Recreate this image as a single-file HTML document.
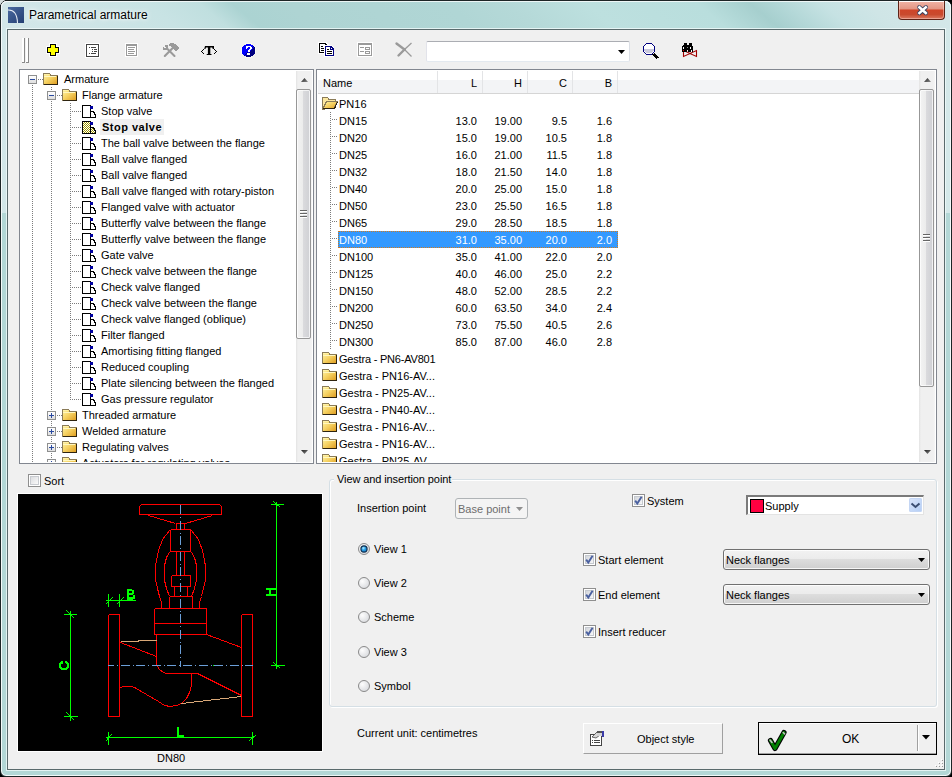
<!DOCTYPE html>
<html><head><meta charset="utf-8"><style>
*{margin:0;padding:0;box-sizing:border-box}
html,body{width:952px;height:777px;overflow:hidden;background:#000}
body{position:relative;font-family:"Liberation Sans",sans-serif;font-size:11px;line-height:13px;color:#000}
.a{position:absolute}
.t{position:absolute;white-space:nowrap;font-size:11px;line-height:13px}
svg{position:absolute;overflow:visible}
</style></head>
<body>
<div class="a tl-corner" style="left:0;top:0;width:5px;height:5px;background:#d6dede"></div>
<div class="a" style="left:0;top:0;width:952px;height:777px;border-radius:7px 7px 6px 6px;background:linear-gradient(100deg,#d3e7e9 0px,#cfe5e6 150px,#bfdfdf 215px,#a9d2d2 265px,#b2d7d6 330px,#b4d8d7 520px,#bfe0df 640px,#b0d6d5 720px,#a8d1d0 755px,#c3e1e2 820px,#d2e7e8 890px,#d4e8e9 952px);border:1px solid #1d2526;box-shadow:inset 0 0 0 1px rgba(255,255,255,.75)"></div>
<div class="a title-grad" style="left:1px;top:1px;width:950px;height:28px;border-radius:6px 6px 0 0;background:linear-gradient(40deg,#d3e7e9 11px,#c8e3e4 114px,#c0dfdf 147px,#abd3d2 168px,#aed4d3 204px,#b0d6d5 306px,#b5d9d8 345px,#bde0df 396px,#b9dedd 467px,#a6cfce 501px,#b4d8d8 522px,#c6e2e3 547px,#cfe5e6 576px,#d4e8e9 623px);box-shadow:inset 0 1px 0 rgba(255,255,255,.75),inset 1px 0 0 rgba(255,255,255,.75),inset -1px 0 0 rgba(255,255,255,.75)"></div>
<div class="a" style="left:2px;top:213px;width:948px;height:562px;border-radius:0 0 5px 5px;background:#b3d7d6"></div>
<div class="a" style="left:6px;top:28px;width:940px;height:743px;border:1px solid rgba(240,250,250,.8)"></div>
<div class="a" style="left:7px;top:29px;width:938px;height:741px;background:#f0f0f0;border:1px solid #5a6a6c"></div>
<svg style="left:8px;top:7px" width="16" height="16" viewBox="0 0 16 16"><defs><linearGradient id="ig" x1="0" y1="0" x2="1" y2="1"><stop offset="0" stop-color="#4a6aa0"/><stop offset="1" stop-color="#243f72"/></linearGradient></defs><rect width="16" height="16" fill="url(#ig)"/><path d="M0 3 Q9 2.5 9.5 16" fill="none" stroke="#e8eef6" stroke-width="1.1"/></svg>
<div class="t" style="left:29px;top:8px;font-size:12px;line-height:14px;color:#000;text-shadow:0 0 6px #fff,0 0 3px #fff">Parametrical armature</div>
<div class="a" style="left:898px;top:1px;width:47px;height:19px;border:1px solid #5d2216;border-top:none;border-radius:0 0 4px 4px;background:linear-gradient(#f0b4a6 0%,#e39684 44%,#cf4529 50%,#c94a2e 75%,#db7a62 100%);box-shadow:inset 0 1px 0 rgba(255,255,255,.95),inset 0 0 0 1px rgba(255,220,210,.45)"></div>
<svg style="left:915px;top:4px" width="15" height="12" viewBox="0 0 15 12"><path d="M4.4 3.3 L10.8 9 M10.8 3.3 L4.4 9" stroke="#3a4260" stroke-width="4.4" stroke-linecap="round"/><path d="M4.4 3.3 L10.8 9 M10.8 3.3 L4.4 9" stroke="#fff" stroke-width="2.5" stroke-linecap="square"/></svg>
<svg style="left:0;top:0" width="952" height="70" viewBox="0 0 952 70" shape-rendering="crispEdges">
<!-- gripper -->
<rect x="22" y="38" width="2" height="25" fill="#fff"/><rect x="24" y="38" width="1" height="25" fill="#8a8a8a"/><rect x="22" y="62" width="3" height="1" fill="#8a8a8a"/>
<rect x="26" y="38" width="2" height="25" fill="#fff"/><rect x="28" y="38" width="1" height="25" fill="#8a8a8a"/><rect x="26" y="62" width="3" height="1" fill="#8a8a8a"/>
<!-- plus -->
<path d="M49 43h8v3h3v8h-3v3h-8v-3h-3v-8h3z" fill="#fff"/>
<path d="M50 44h6v3h3v6h-3v3h-6v-3h-3v-6h3z" fill="#000"/>
<path d="M51 45h4v3h3v4h-3v3h-4v-3h-3v-4h3z" fill="#ffff00"/>
<!-- list icon -->
<rect x="85" y="43" width="15" height="15" fill="#fff"/>
<rect x="86" y="44" width="13" height="13" fill="#444"/><rect x="87" y="45" width="11" height="11" fill="#fff"/>
<rect x="89" y="47" width="1" height="1" fill="#444"/><rect x="91" y="47" width="5" height="1" fill="#444"/>
<rect x="92" y="49" width="1" height="1" fill="#444"/><rect x="94" y="49" width="3" height="1" fill="#444"/>
<rect x="92" y="51" width="1" height="1" fill="#444"/><rect x="94" y="51" width="3" height="1" fill="#444"/>
<rect x="89" y="53" width="1" height="1" fill="#444"/><rect x="91" y="53" width="5" height="1" fill="#444"/>
<!-- gray doc -->
<rect x="125" y="43" width="13" height="14" fill="#fff"/>
<rect x="126" y="44" width="11" height="12" fill="#9a9a9a"/><rect x="127" y="46" width="9" height="9" fill="#fff"/>
<rect x="128" y="47" width="7" height="1" fill="#9a9a9a"/><rect x="128" y="49" width="6" height="1" fill="#9a9a9a"/><rect x="128" y="51" width="7" height="1" fill="#9a9a9a"/><rect x="128" y="53" width="6" height="1" fill="#9a9a9a"/>
</svg>
<svg style="left:0;top:0" width="952" height="70" viewBox="0 0 952 70" shape-rendering="crispEdges"><rect x="170" y="43" width="4" height="1" fill="#9a9a9a"/><rect x="169" y="44" width="7" height="1" fill="#9a9a9a"/><rect x="165" y="45" width="3" height="1" fill="#9a9a9a"/><rect x="169" y="45" width="8" height="1" fill="#9a9a9a"/><rect x="165" y="46" width="3" height="1" fill="#9a9a9a"/><rect x="171" y="46" width="7" height="1" fill="#9a9a9a"/><rect x="163" y="47" width="1" height="1" fill="#9a9a9a"/><rect x="166" y="47" width="2" height="1" fill="#9a9a9a"/><rect x="172" y="47" width="7" height="1" fill="#9a9a9a"/><rect x="163" y="48" width="5" height="1" fill="#9a9a9a"/><rect x="173" y="48" width="6" height="1" fill="#9a9a9a"/><rect x="163" y="49" width="6" height="1" fill="#9a9a9a"/><rect x="174" y="49" width="4" height="1" fill="#9a9a9a"/><rect x="175" y="50" width="2" height="1" fill="#9a9a9a"/></svg>
<svg style="left:0;top:0" width="952" height="70" viewBox="0 0 952 70"><path d="M164.8 56 L172.5 48.3 M174.5 56 L167.5 49" stroke="#9a9a9a" stroke-width="2.1" stroke-linecap="round"/></svg>
<svg style="left:198px;top:40px" width="22" height="20" viewBox="0 0 22 20">
<path d="M6 9h1v1h-1v1h-1v1h-1v1h1v1h1v1h1v1h-1v-1h-1v-1h-1v-1h-1v-1h1v-1h1v-1h1z" fill="none"/><g shape-rendering="crispEdges" fill="#000"><rect x="5" y="9" width="1" height="1"/><rect x="4" y="10" width="1" height="1"/><rect x="3" y="11" width="1" height="1"/><rect x="4" y="12" width="1" height="1"/><rect x="5" y="13" width="1" height="1"/><rect x="16" y="9" width="1" height="1"/><rect x="17" y="10" width="1" height="1"/><rect x="18" y="11" width="1" height="1"/><rect x="17" y="12" width="1" height="1"/><rect x="16" y="13" width="1" height="1"/></g>
<path d="M7 6h9v3h-1.2l-.6-1.6h-1.9v6.6h1.2v1h-4.8v-1h1.2v-6.6h-1.9l-.6 1.6h-1.2z" fill="#000"/>
</svg>
<svg style="left:0;top:0" width="952" height="70" viewBox="0 0 952 70" shape-rendering="crispEdges"><rect x="245" y="43" width="7" height="1" fill="#fffff0" opacity=".8"/><rect x="245" y="57" width="7" height="1" fill="#fffff0" opacity=".8"/><rect x="241" y="47" width="1" height="7" fill="#fffff0" opacity=".8"/><rect x="255" y="47" width="1" height="7" fill="#fffff0" opacity=".8"/><rect x="246" y="44" width="1" height="1" fill="#0000ff"/><rect x="247" y="44" width="1" height="1" fill="#0000ff"/><rect x="248" y="44" width="1" height="1" fill="#0000ff"/><rect x="249" y="44" width="1" height="1" fill="#0000ff"/><rect x="250" y="44" width="1" height="1" fill="#0000ff"/><rect x="244" y="45" width="1" height="1" fill="#0000ff"/><rect x="245" y="45" width="1" height="1" fill="#0000ff"/><rect x="246" y="45" width="1" height="1" fill="#0000ff"/><rect x="247" y="45" width="1" height="1" fill="#0000ff"/><rect x="248" y="45" width="1" height="1" fill="#0000ff"/><rect x="249" y="45" width="1" height="1" fill="#0000ff"/><rect x="250" y="45" width="1" height="1" fill="#0000ff"/><rect x="251" y="45" width="1" height="1" fill="#0000ff"/><rect x="252" y="45" width="1" height="1" fill="#0000ff"/><rect x="243" y="46" width="1" height="1" fill="#0000ff"/><rect x="244" y="46" width="1" height="1" fill="#0000ff"/><rect x="245" y="46" width="1" height="1" fill="#0000ff"/><rect x="246" y="46" width="1" height="1" fill="#0000ff"/><rect x="247" y="46" width="1" height="1" fill="#0000ff"/><rect x="248" y="46" width="1" height="1" fill="#0000ff"/><rect x="249" y="46" width="1" height="1" fill="#0000ff"/><rect x="250" y="46" width="1" height="1" fill="#0000ff"/><rect x="251" y="46" width="1" height="1" fill="#0000ff"/><rect x="252" y="46" width="1" height="1" fill="#0000ff"/><rect x="253" y="46" width="1" height="1" fill="#000080"/><rect x="242" y="47" width="1" height="1" fill="#0000ff"/><rect x="243" y="47" width="1" height="1" fill="#0000ff"/><rect x="244" y="47" width="1" height="1" fill="#0000ff"/><rect x="245" y="47" width="1" height="1" fill="#0000ff"/><rect x="246" y="47" width="1" height="1" fill="#0000ff"/><rect x="247" y="47" width="1" height="1" fill="#0000ff"/><rect x="248" y="47" width="1" height="1" fill="#0000ff"/><rect x="249" y="47" width="1" height="1" fill="#0000ff"/><rect x="250" y="47" width="1" height="1" fill="#0000ff"/><rect x="251" y="47" width="1" height="1" fill="#0000ff"/><rect x="252" y="47" width="1" height="1" fill="#000080"/><rect x="253" y="47" width="1" height="1" fill="#0000ff"/><rect x="254" y="47" width="1" height="1" fill="#000080"/><rect x="242" y="48" width="1" height="1" fill="#0000ff"/><rect x="243" y="48" width="1" height="1" fill="#0000ff"/><rect x="244" y="48" width="1" height="1" fill="#0000ff"/><rect x="245" y="48" width="1" height="1" fill="#0000ff"/><rect x="246" y="48" width="1" height="1" fill="#0000ff"/><rect x="247" y="48" width="1" height="1" fill="#0000ff"/><rect x="248" y="48" width="1" height="1" fill="#0000ff"/><rect x="249" y="48" width="1" height="1" fill="#0000ff"/><rect x="250" y="48" width="1" height="1" fill="#0000ff"/><rect x="251" y="48" width="1" height="1" fill="#000080"/><rect x="252" y="48" width="1" height="1" fill="#0000ff"/><rect x="253" y="48" width="1" height="1" fill="#000080"/><rect x="254" y="48" width="1" height="1" fill="#000080"/><rect x="242" y="49" width="1" height="1" fill="#0000ff"/><rect x="243" y="49" width="1" height="1" fill="#0000ff"/><rect x="244" y="49" width="1" height="1" fill="#0000ff"/><rect x="245" y="49" width="1" height="1" fill="#0000ff"/><rect x="246" y="49" width="1" height="1" fill="#0000ff"/><rect x="247" y="49" width="1" height="1" fill="#0000ff"/><rect x="248" y="49" width="1" height="1" fill="#0000ff"/><rect x="249" y="49" width="1" height="1" fill="#0000ff"/><rect x="250" y="49" width="1" height="1" fill="#000080"/><rect x="251" y="49" width="1" height="1" fill="#0000ff"/><rect x="252" y="49" width="1" height="1" fill="#000080"/><rect x="253" y="49" width="1" height="1" fill="#000080"/><rect x="254" y="49" width="1" height="1" fill="#000080"/><rect x="242" y="50" width="1" height="1" fill="#0000ff"/><rect x="243" y="50" width="1" height="1" fill="#0000ff"/><rect x="244" y="50" width="1" height="1" fill="#0000ff"/><rect x="245" y="50" width="1" height="1" fill="#0000ff"/><rect x="246" y="50" width="1" height="1" fill="#0000ff"/><rect x="247" y="50" width="1" height="1" fill="#0000ff"/><rect x="248" y="50" width="1" height="1" fill="#0000ff"/><rect x="249" y="50" width="1" height="1" fill="#000080"/><rect x="250" y="50" width="1" height="1" fill="#0000ff"/><rect x="251" y="50" width="1" height="1" fill="#000080"/><rect x="252" y="50" width="1" height="1" fill="#000080"/><rect x="253" y="50" width="1" height="1" fill="#000080"/><rect x="254" y="50" width="1" height="1" fill="#000080"/><rect x="242" y="51" width="1" height="1" fill="#0000ff"/><rect x="243" y="51" width="1" height="1" fill="#0000ff"/><rect x="244" y="51" width="1" height="1" fill="#0000ff"/><rect x="245" y="51" width="1" height="1" fill="#0000ff"/><rect x="246" y="51" width="1" height="1" fill="#0000ff"/><rect x="247" y="51" width="1" height="1" fill="#0000ff"/><rect x="248" y="51" width="1" height="1" fill="#000080"/><rect x="249" y="51" width="1" height="1" fill="#0000ff"/><rect x="250" y="51" width="1" height="1" fill="#000080"/><rect x="251" y="51" width="1" height="1" fill="#000080"/><rect x="252" y="51" width="1" height="1" fill="#000080"/><rect x="253" y="51" width="1" height="1" fill="#000080"/><rect x="254" y="51" width="1" height="1" fill="#000080"/><rect x="242" y="52" width="1" height="1" fill="#0000ff"/><rect x="243" y="52" width="1" height="1" fill="#0000ff"/><rect x="244" y="52" width="1" height="1" fill="#0000ff"/><rect x="245" y="52" width="1" height="1" fill="#0000ff"/><rect x="246" y="52" width="1" height="1" fill="#0000ff"/><rect x="247" y="52" width="1" height="1" fill="#000080"/><rect x="248" y="52" width="1" height="1" fill="#0000ff"/><rect x="249" y="52" width="1" height="1" fill="#000080"/><rect x="250" y="52" width="1" height="1" fill="#000080"/><rect x="251" y="52" width="1" height="1" fill="#000080"/><rect x="252" y="52" width="1" height="1" fill="#000080"/><rect x="253" y="52" width="1" height="1" fill="#000080"/><rect x="254" y="52" width="1" height="1" fill="#000080"/><rect x="242" y="53" width="1" height="1" fill="#0000ff"/><rect x="243" y="53" width="1" height="1" fill="#0000ff"/><rect x="244" y="53" width="1" height="1" fill="#0000ff"/><rect x="245" y="53" width="1" height="1" fill="#0000ff"/><rect x="246" y="53" width="1" height="1" fill="#000080"/><rect x="247" y="53" width="1" height="1" fill="#0000ff"/><rect x="248" y="53" width="1" height="1" fill="#000080"/><rect x="249" y="53" width="1" height="1" fill="#000080"/><rect x="250" y="53" width="1" height="1" fill="#000080"/><rect x="251" y="53" width="1" height="1" fill="#000080"/><rect x="252" y="53" width="1" height="1" fill="#000080"/><rect x="253" y="53" width="1" height="1" fill="#000080"/><rect x="254" y="53" width="1" height="1" fill="#000080"/><rect x="243" y="54" width="1" height="1" fill="#0000ff"/><rect x="244" y="54" width="1" height="1" fill="#0000ff"/><rect x="245" y="54" width="1" height="1" fill="#000080"/><rect x="246" y="54" width="1" height="1" fill="#0000ff"/><rect x="247" y="54" width="1" height="1" fill="#000080"/><rect x="248" y="54" width="1" height="1" fill="#000080"/><rect x="249" y="54" width="1" height="1" fill="#000080"/><rect x="250" y="54" width="1" height="1" fill="#000080"/><rect x="251" y="54" width="1" height="1" fill="#000080"/><rect x="252" y="54" width="1" height="1" fill="#000080"/><rect x="253" y="54" width="1" height="1" fill="#000080"/><rect x="244" y="55" width="1" height="1" fill="#000080"/><rect x="245" y="55" width="1" height="1" fill="#0000ff"/><rect x="246" y="55" width="1" height="1" fill="#000080"/><rect x="247" y="55" width="1" height="1" fill="#000080"/><rect x="248" y="55" width="1" height="1" fill="#000080"/><rect x="249" y="55" width="1" height="1" fill="#000080"/><rect x="250" y="55" width="1" height="1" fill="#000080"/><rect x="251" y="55" width="1" height="1" fill="#000080"/><rect x="252" y="55" width="1" height="1" fill="#000080"/><rect x="246" y="56" width="1" height="1" fill="#000080"/><rect x="247" y="56" width="1" height="1" fill="#000080"/><rect x="248" y="56" width="1" height="1" fill="#000080"/><rect x="249" y="56" width="1" height="1" fill="#000080"/><rect x="250" y="56" width="1" height="1" fill="#000080"/><rect x="246" y="46" width="5" height="1" fill="#fff"/><rect x="246" y="47" width="2" height="1" fill="#fff"/><rect x="250" y="47" width="2" height="1" fill="#fff"/><rect x="246" y="48" width="1" height="1" fill="#fff"/><rect x="250" y="48" width="2" height="1" fill="#fff"/><rect x="249" y="49" width="2" height="1" fill="#fff"/><rect x="248" y="50" width="2" height="1" fill="#fff"/><rect x="248" y="51" width="2" height="1" fill="#fff"/><rect x="247" y="53" width="3" height="2" fill="#fff"/></svg>
<svg style="left:0;top:0" width="952" height="70" viewBox="0 0 952 70" shape-rendering="crispEdges">
<!-- copy -->
<path d="M318 42h8l3 3v9h-11z" fill="#fff"/>
<path d="M319 43h6l2 2v8h-8z" fill="#000"/><path d="M320 44h5v2h1v6h-6z" fill="#fff"/>
<rect x="321" y="46" width="2" height="1" fill="#000"/><rect x="321" y="48" width="3" height="1" fill="#000"/><rect x="321" y="50" width="3" height="1" fill="#000"/>
<path d="M324 45h7l3 3v9h-10z" fill="#fff"/>
<path d="M325 46h6l3 3v7h-9z" fill="#000080"/><path d="M326 47h4v3h3v5h-7z" fill="#fff"/><rect x="331" y="48" width="1" height="1" fill="#fff"/>
<rect x="327" y="49" width="2" height="1" fill="#000"/><rect x="327" y="51" width="5" height="1" fill="#000"/><rect x="327" y="53" width="5" height="1" fill="#000"/>
<!-- form gray -->
<rect x="357" y="42" width="16" height="15" fill="#fff"/>
<rect x="358" y="43" width="14" height="13" fill="#9a9a9a"/><rect x="359" y="45" width="12" height="10" fill="#fff"/>
<rect x="360" y="47" width="4" height="1" fill="#9a9a9a"/><rect x="360" y="51" width="4" height="1" fill="#9a9a9a"/>
<rect x="365" y="47" width="5" height="3" fill="#9a9a9a"/><rect x="366" y="48" width="3" height="1" fill="#fff"/>
<rect x="365" y="51" width="5" height="3" fill="#9a9a9a"/><rect x="366" y="52" width="3" height="1" fill="#fff"/>
</svg>
<svg style="left:392px;top:40px" width="24" height="20" viewBox="0 0 24 20">
<path d="M4.5 3.5 L12.5 9.5" stroke="#9a9a9a" stroke-width="2.4" stroke-linecap="round"/>
<path d="M12.5 9.5 L19.5 16.5" stroke="#9a9a9a" stroke-width="1.2"/>
<path d="M19.5 3 L12.5 9.5" stroke="#9a9a9a" stroke-width="1.3"/>
<path d="M12.5 9.5 L6.5 15.5" stroke="#9a9a9a" stroke-width="2.4" stroke-linecap="round"/>
</svg>
<div class="a" style="left:426px;top:41px;width:204px;height:21px;border:1px solid #abadb3;border-top-color:#abadb3;border-left-color:#e2e3ea;border-bottom-color:#e3e9ef;border-right-color:#dbdfe6;border-radius:2px;background:#fff"></div>
<svg style="left:0;top:0" width="952" height="70" viewBox="0 0 952 70" shape-rendering="crispEdges">
<path d="M618 50h7l-3.5 4z" fill="#000" shape-rendering="auto"/>
</svg>
<svg style="left:0;top:0" width="952" height="70" viewBox="0 0 952 70" shape-rendering="crispEdges">
<path d="M646 43h6v1h1v1h1v1h1v6h-1v1h-1v1h-1v1h-6v-1h-1v-1h-1v-1h-1v-6h1v-1h1v-1h1z" fill="#000080"/>
<path d="M646 44h6v1h1v1h1v6h-1v1h-1v1h-6v-1h-1v-1h-1v-6h1v-1h1z" fill="#fff"/>
<path d="M644 49h10v2h-1v1h-1v1h-6v-1h-1v-1h-1z" fill="#c9c9dd"/>
<path d="M653 54h2v1h1v1h1v1h1v1h-1v1h-1v-1h-1v-1h-1v-1h-1v-1h-1v-1z" fill="#000"/>
<path d="M654 53h1v1h1v1h1v1h1v1h1v1h-1v-1h-1v-1h-1v-1h-1v-1h-1z" fill="#000"/>
</svg>
<svg style="left:0;top:0" width="952" height="70" viewBox="0 0 952 70">
<path d="M683.5 50.5 L690 53.5 L696.5 50.5 V56.5 L690 53.5 L683.5 56.5 Z" fill="none" stroke="#a00000" stroke-width="1.1"/>
</svg>
<svg style="left:0;top:0" width="952" height="70" viewBox="0 0 952 70" shape-rendering="crispEdges">
<path d="M684 43h3v2h2v-2h3v3h1v6h-5v-2h-1v2h-5v-6h1v-1h1z" fill="#000"/>
<rect x="683" y="47" width="1" height="2" fill="#fff"/><rect x="690" y="47" width="1" height="2" fill="#fff"/><rect x="687" y="47" width="1" height="1" fill="#888"/><rect x="691" y="50" width="1" height="2" fill="#fff"/><rect x="683" y="50" width="1" height="1" fill="#d00"/>
</svg>
<div class="a" style="left:19px;top:69px;width:295px;height:395px;border:1px solid #828790;background:#fff;overflow:hidden">
<div class="t" style="left:44px;top:3px">Armature</div><div class="t" style="left:62px;top:19px">Flange armature</div><div class="t" style="left:81px;top:35px">Stop valve</div><div class="a" style="left:80px;top:49px;width:64px;height:16px;background:#f0f0f0"></div><div class="t" style="left:82px;top:51px;font-weight:bold;letter-spacing:0.5px">Stop valve</div><div class="t" style="left:81px;top:67px">The ball valve between the flange</div><div class="t" style="left:81px;top:83px">Ball valve flanged</div><div class="t" style="left:81px;top:99px">Ball valve flanged</div><div class="t" style="left:81px;top:115px">Ball valve flanged with rotary-piston</div><div class="t" style="left:81px;top:131px">Flanged valve with actuator</div><div class="t" style="left:81px;top:147px">Butterfly valve between the flange</div><div class="t" style="left:81px;top:163px">Butterfly valve between the flange</div><div class="t" style="left:81px;top:179px">Gate valve</div><div class="t" style="left:81px;top:195px">Check valve between the flange</div><div class="t" style="left:81px;top:211px">Check valve flanged</div><div class="t" style="left:81px;top:227px">Check valve between the flange</div><div class="t" style="left:81px;top:243px">Check valve flanged (oblique)</div><div class="t" style="left:81px;top:259px">Filter flanged</div><div class="t" style="left:81px;top:275px">Amortising fitting flanged</div><div class="t" style="left:81px;top:291px">Reduced coupling</div><div class="t" style="left:81px;top:307px">Plate silencing between the flanged</div><div class="t" style="left:81px;top:323px">Gas pressure regulator</div><div class="t" style="left:62px;top:339px">Threaded armature</div><div class="t" style="left:62px;top:355px">Welded armature</div><div class="t" style="left:62px;top:371px">Regulating valves</div><div class="t" style="left:62px;top:387px">Actuators for regulating valves</div>
<svg style="left:-20px;top:-70px" width="952" height="777" viewBox="0 0 952 777" shape-rendering="crispEdges"><defs><linearGradient id="fd" x1="0" y1="0" x2="1" y2="1"><stop offset="0" stop-color="#fff6a8"/><stop offset=".5" stop-color="#f5d060"/><stop offset="1" stop-color="#de9c20"/></linearGradient><linearGradient id="bx" x1="0" y1="0" x2="0" y2="1"><stop offset="0" stop-color="#fff"/><stop offset=".5" stop-color="#f4f4f4"/><stop offset=".6" stop-color="#e6e6e6"/><stop offset="1" stop-color="#e0e0e0"/></linearGradient>

<pattern id="dith" width="2" height="2" patternUnits="userSpaceOnUse"><rect width="2" height="2" fill="#fff"/><rect width="1" height="1" fill="#a09800"/><rect x="1" y="1" width="1" height="1" fill="#a09800"/></pattern></defs><rect x="32" y="85" width="1" height="1" fill="#7c7c7c"/><rect x="32" y="87" width="1" height="1" fill="#7c7c7c"/><rect x="32" y="89" width="1" height="1" fill="#7c7c7c"/><rect x="32" y="91" width="1" height="1" fill="#7c7c7c"/><rect x="32" y="93" width="1" height="1" fill="#7c7c7c"/><rect x="32" y="95" width="1" height="1" fill="#7c7c7c"/><rect x="32" y="97" width="1" height="1" fill="#7c7c7c"/><rect x="32" y="99" width="1" height="1" fill="#7c7c7c"/><rect x="32" y="101" width="1" height="1" fill="#7c7c7c"/><rect x="32" y="103" width="1" height="1" fill="#7c7c7c"/><rect x="32" y="105" width="1" height="1" fill="#7c7c7c"/><rect x="32" y="107" width="1" height="1" fill="#7c7c7c"/><rect x="32" y="109" width="1" height="1" fill="#7c7c7c"/><rect x="32" y="111" width="1" height="1" fill="#7c7c7c"/><rect x="32" y="113" width="1" height="1" fill="#7c7c7c"/><rect x="32" y="115" width="1" height="1" fill="#7c7c7c"/><rect x="32" y="117" width="1" height="1" fill="#7c7c7c"/><rect x="32" y="119" width="1" height="1" fill="#7c7c7c"/><rect x="32" y="121" width="1" height="1" fill="#7c7c7c"/><rect x="32" y="123" width="1" height="1" fill="#7c7c7c"/><rect x="32" y="125" width="1" height="1" fill="#7c7c7c"/><rect x="32" y="127" width="1" height="1" fill="#7c7c7c"/><rect x="32" y="129" width="1" height="1" fill="#7c7c7c"/><rect x="32" y="131" width="1" height="1" fill="#7c7c7c"/><rect x="32" y="133" width="1" height="1" fill="#7c7c7c"/><rect x="32" y="135" width="1" height="1" fill="#7c7c7c"/><rect x="32" y="137" width="1" height="1" fill="#7c7c7c"/><rect x="32" y="139" width="1" height="1" fill="#7c7c7c"/><rect x="32" y="141" width="1" height="1" fill="#7c7c7c"/><rect x="32" y="143" width="1" height="1" fill="#7c7c7c"/><rect x="32" y="145" width="1" height="1" fill="#7c7c7c"/><rect x="32" y="147" width="1" height="1" fill="#7c7c7c"/><rect x="32" y="149" width="1" height="1" fill="#7c7c7c"/><rect x="32" y="151" width="1" height="1" fill="#7c7c7c"/><rect x="32" y="153" width="1" height="1" fill="#7c7c7c"/><rect x="32" y="155" width="1" height="1" fill="#7c7c7c"/><rect x="32" y="157" width="1" height="1" fill="#7c7c7c"/><rect x="32" y="159" width="1" height="1" fill="#7c7c7c"/><rect x="32" y="161" width="1" height="1" fill="#7c7c7c"/><rect x="32" y="163" width="1" height="1" fill="#7c7c7c"/><rect x="32" y="165" width="1" height="1" fill="#7c7c7c"/><rect x="32" y="167" width="1" height="1" fill="#7c7c7c"/><rect x="32" y="169" width="1" height="1" fill="#7c7c7c"/><rect x="32" y="171" width="1" height="1" fill="#7c7c7c"/><rect x="32" y="173" width="1" height="1" fill="#7c7c7c"/><rect x="32" y="175" width="1" height="1" fill="#7c7c7c"/><rect x="32" y="177" width="1" height="1" fill="#7c7c7c"/><rect x="32" y="179" width="1" height="1" fill="#7c7c7c"/><rect x="32" y="181" width="1" height="1" fill="#7c7c7c"/><rect x="32" y="183" width="1" height="1" fill="#7c7c7c"/><rect x="32" y="185" width="1" height="1" fill="#7c7c7c"/><rect x="32" y="187" width="1" height="1" fill="#7c7c7c"/><rect x="32" y="189" width="1" height="1" fill="#7c7c7c"/><rect x="32" y="191" width="1" height="1" fill="#7c7c7c"/><rect x="32" y="193" width="1" height="1" fill="#7c7c7c"/><rect x="32" y="195" width="1" height="1" fill="#7c7c7c"/><rect x="32" y="197" width="1" height="1" fill="#7c7c7c"/><rect x="32" y="199" width="1" height="1" fill="#7c7c7c"/><rect x="32" y="201" width="1" height="1" fill="#7c7c7c"/><rect x="32" y="203" width="1" height="1" fill="#7c7c7c"/><rect x="32" y="205" width="1" height="1" fill="#7c7c7c"/><rect x="32" y="207" width="1" height="1" fill="#7c7c7c"/><rect x="32" y="209" width="1" height="1" fill="#7c7c7c"/><rect x="32" y="211" width="1" height="1" fill="#7c7c7c"/><rect x="32" y="213" width="1" height="1" fill="#7c7c7c"/><rect x="32" y="215" width="1" height="1" fill="#7c7c7c"/><rect x="32" y="217" width="1" height="1" fill="#7c7c7c"/><rect x="32" y="219" width="1" height="1" fill="#7c7c7c"/><rect x="32" y="221" width="1" height="1" fill="#7c7c7c"/><rect x="32" y="223" width="1" height="1" fill="#7c7c7c"/><rect x="32" y="225" width="1" height="1" fill="#7c7c7c"/><rect x="32" y="227" width="1" height="1" fill="#7c7c7c"/><rect x="32" y="229" width="1" height="1" fill="#7c7c7c"/><rect x="32" y="231" width="1" height="1" fill="#7c7c7c"/><rect x="32" y="233" width="1" height="1" fill="#7c7c7c"/><rect x="32" y="235" width="1" height="1" fill="#7c7c7c"/><rect x="32" y="237" width="1" height="1" fill="#7c7c7c"/><rect x="32" y="239" width="1" height="1" fill="#7c7c7c"/><rect x="32" y="241" width="1" height="1" fill="#7c7c7c"/><rect x="32" y="243" width="1" height="1" fill="#7c7c7c"/><rect x="32" y="245" width="1" height="1" fill="#7c7c7c"/><rect x="32" y="247" width="1" height="1" fill="#7c7c7c"/><rect x="32" y="249" width="1" height="1" fill="#7c7c7c"/><rect x="32" y="251" width="1" height="1" fill="#7c7c7c"/><rect x="32" y="253" width="1" height="1" fill="#7c7c7c"/><rect x="32" y="255" width="1" height="1" fill="#7c7c7c"/><rect x="32" y="257" width="1" height="1" fill="#7c7c7c"/><rect x="32" y="259" width="1" height="1" fill="#7c7c7c"/><rect x="32" y="261" width="1" height="1" fill="#7c7c7c"/><rect x="32" y="263" width="1" height="1" fill="#7c7c7c"/><rect x="32" y="265" width="1" height="1" fill="#7c7c7c"/><rect x="32" y="267" width="1" height="1" fill="#7c7c7c"/><rect x="32" y="269" width="1" height="1" fill="#7c7c7c"/><rect x="32" y="271" width="1" height="1" fill="#7c7c7c"/><rect x="32" y="273" width="1" height="1" fill="#7c7c7c"/><rect x="32" y="275" width="1" height="1" fill="#7c7c7c"/><rect x="32" y="277" width="1" height="1" fill="#7c7c7c"/><rect x="32" y="279" width="1" height="1" fill="#7c7c7c"/><rect x="32" y="281" width="1" height="1" fill="#7c7c7c"/><rect x="32" y="283" width="1" height="1" fill="#7c7c7c"/><rect x="32" y="285" width="1" height="1" fill="#7c7c7c"/><rect x="32" y="287" width="1" height="1" fill="#7c7c7c"/><rect x="32" y="289" width="1" height="1" fill="#7c7c7c"/><rect x="32" y="291" width="1" height="1" fill="#7c7c7c"/><rect x="32" y="293" width="1" height="1" fill="#7c7c7c"/><rect x="32" y="295" width="1" height="1" fill="#7c7c7c"/><rect x="32" y="297" width="1" height="1" fill="#7c7c7c"/><rect x="32" y="299" width="1" height="1" fill="#7c7c7c"/><rect x="32" y="301" width="1" height="1" fill="#7c7c7c"/><rect x="32" y="303" width="1" height="1" fill="#7c7c7c"/><rect x="32" y="305" width="1" height="1" fill="#7c7c7c"/><rect x="32" y="307" width="1" height="1" fill="#7c7c7c"/><rect x="32" y="309" width="1" height="1" fill="#7c7c7c"/><rect x="32" y="311" width="1" height="1" fill="#7c7c7c"/><rect x="32" y="313" width="1" height="1" fill="#7c7c7c"/><rect x="32" y="315" width="1" height="1" fill="#7c7c7c"/><rect x="32" y="317" width="1" height="1" fill="#7c7c7c"/><rect x="32" y="319" width="1" height="1" fill="#7c7c7c"/><rect x="32" y="321" width="1" height="1" fill="#7c7c7c"/><rect x="32" y="323" width="1" height="1" fill="#7c7c7c"/><rect x="32" y="325" width="1" height="1" fill="#7c7c7c"/><rect x="32" y="327" width="1" height="1" fill="#7c7c7c"/><rect x="32" y="329" width="1" height="1" fill="#7c7c7c"/><rect x="32" y="331" width="1" height="1" fill="#7c7c7c"/><rect x="32" y="333" width="1" height="1" fill="#7c7c7c"/><rect x="32" y="335" width="1" height="1" fill="#7c7c7c"/><rect x="32" y="337" width="1" height="1" fill="#7c7c7c"/><rect x="32" y="339" width="1" height="1" fill="#7c7c7c"/><rect x="32" y="341" width="1" height="1" fill="#7c7c7c"/><rect x="32" y="343" width="1" height="1" fill="#7c7c7c"/><rect x="32" y="345" width="1" height="1" fill="#7c7c7c"/><rect x="32" y="347" width="1" height="1" fill="#7c7c7c"/><rect x="32" y="349" width="1" height="1" fill="#7c7c7c"/><rect x="32" y="351" width="1" height="1" fill="#7c7c7c"/><rect x="32" y="353" width="1" height="1" fill="#7c7c7c"/><rect x="32" y="355" width="1" height="1" fill="#7c7c7c"/><rect x="32" y="357" width="1" height="1" fill="#7c7c7c"/><rect x="32" y="359" width="1" height="1" fill="#7c7c7c"/><rect x="32" y="361" width="1" height="1" fill="#7c7c7c"/><rect x="32" y="363" width="1" height="1" fill="#7c7c7c"/><rect x="32" y="365" width="1" height="1" fill="#7c7c7c"/><rect x="32" y="367" width="1" height="1" fill="#7c7c7c"/><rect x="32" y="369" width="1" height="1" fill="#7c7c7c"/><rect x="32" y="371" width="1" height="1" fill="#7c7c7c"/><rect x="32" y="373" width="1" height="1" fill="#7c7c7c"/><rect x="32" y="375" width="1" height="1" fill="#7c7c7c"/><rect x="32" y="377" width="1" height="1" fill="#7c7c7c"/><rect x="32" y="379" width="1" height="1" fill="#7c7c7c"/><rect x="32" y="381" width="1" height="1" fill="#7c7c7c"/><rect x="32" y="383" width="1" height="1" fill="#7c7c7c"/><rect x="32" y="385" width="1" height="1" fill="#7c7c7c"/><rect x="32" y="387" width="1" height="1" fill="#7c7c7c"/><rect x="32" y="389" width="1" height="1" fill="#7c7c7c"/><rect x="32" y="391" width="1" height="1" fill="#7c7c7c"/><rect x="32" y="393" width="1" height="1" fill="#7c7c7c"/><rect x="32" y="395" width="1" height="1" fill="#7c7c7c"/><rect x="32" y="397" width="1" height="1" fill="#7c7c7c"/><rect x="32" y="399" width="1" height="1" fill="#7c7c7c"/><rect x="32" y="401" width="1" height="1" fill="#7c7c7c"/><rect x="32" y="403" width="1" height="1" fill="#7c7c7c"/><rect x="32" y="405" width="1" height="1" fill="#7c7c7c"/><rect x="32" y="407" width="1" height="1" fill="#7c7c7c"/><rect x="32" y="409" width="1" height="1" fill="#7c7c7c"/><rect x="32" y="411" width="1" height="1" fill="#7c7c7c"/><rect x="32" y="413" width="1" height="1" fill="#7c7c7c"/><rect x="32" y="415" width="1" height="1" fill="#7c7c7c"/><rect x="32" y="417" width="1" height="1" fill="#7c7c7c"/><rect x="32" y="419" width="1" height="1" fill="#7c7c7c"/><rect x="32" y="421" width="1" height="1" fill="#7c7c7c"/><rect x="32" y="423" width="1" height="1" fill="#7c7c7c"/><rect x="32" y="425" width="1" height="1" fill="#7c7c7c"/><rect x="32" y="427" width="1" height="1" fill="#7c7c7c"/><rect x="32" y="429" width="1" height="1" fill="#7c7c7c"/><rect x="32" y="431" width="1" height="1" fill="#7c7c7c"/><rect x="32" y="433" width="1" height="1" fill="#7c7c7c"/><rect x="32" y="435" width="1" height="1" fill="#7c7c7c"/><rect x="32" y="437" width="1" height="1" fill="#7c7c7c"/><rect x="32" y="439" width="1" height="1" fill="#7c7c7c"/><rect x="32" y="441" width="1" height="1" fill="#7c7c7c"/><rect x="32" y="443" width="1" height="1" fill="#7c7c7c"/><rect x="32" y="445" width="1" height="1" fill="#7c7c7c"/><rect x="32" y="447" width="1" height="1" fill="#7c7c7c"/><rect x="32" y="449" width="1" height="1" fill="#7c7c7c"/><rect x="32" y="451" width="1" height="1" fill="#7c7c7c"/><rect x="32" y="453" width="1" height="1" fill="#7c7c7c"/><rect x="32" y="455" width="1" height="1" fill="#7c7c7c"/><rect x="32" y="457" width="1" height="1" fill="#7c7c7c"/><rect x="32" y="459" width="1" height="1" fill="#7c7c7c"/><rect x="32" y="461" width="1" height="1" fill="#7c7c7c"/><rect x="32" y="463" width="1" height="1" fill="#7c7c7c"/><rect x="32" y="465" width="1" height="1" fill="#7c7c7c"/><rect x="32" y="467" width="1" height="1" fill="#7c7c7c"/><rect x="32" y="469" width="1" height="1" fill="#7c7c7c"/><rect x="51" y="87" width="1" height="1" fill="#7c7c7c"/><rect x="51" y="89" width="1" height="1" fill="#7c7c7c"/><rect x="51" y="91" width="1" height="1" fill="#7c7c7c"/><rect x="51" y="93" width="1" height="1" fill="#7c7c7c"/><rect x="51" y="95" width="1" height="1" fill="#7c7c7c"/><rect x="51" y="97" width="1" height="1" fill="#7c7c7c"/><rect x="51" y="99" width="1" height="1" fill="#7c7c7c"/><rect x="51" y="101" width="1" height="1" fill="#7c7c7c"/><rect x="51" y="103" width="1" height="1" fill="#7c7c7c"/><rect x="51" y="105" width="1" height="1" fill="#7c7c7c"/><rect x="51" y="107" width="1" height="1" fill="#7c7c7c"/><rect x="51" y="109" width="1" height="1" fill="#7c7c7c"/><rect x="51" y="111" width="1" height="1" fill="#7c7c7c"/><rect x="51" y="113" width="1" height="1" fill="#7c7c7c"/><rect x="51" y="115" width="1" height="1" fill="#7c7c7c"/><rect x="51" y="117" width="1" height="1" fill="#7c7c7c"/><rect x="51" y="119" width="1" height="1" fill="#7c7c7c"/><rect x="51" y="121" width="1" height="1" fill="#7c7c7c"/><rect x="51" y="123" width="1" height="1" fill="#7c7c7c"/><rect x="51" y="125" width="1" height="1" fill="#7c7c7c"/><rect x="51" y="127" width="1" height="1" fill="#7c7c7c"/><rect x="51" y="129" width="1" height="1" fill="#7c7c7c"/><rect x="51" y="131" width="1" height="1" fill="#7c7c7c"/><rect x="51" y="133" width="1" height="1" fill="#7c7c7c"/><rect x="51" y="135" width="1" height="1" fill="#7c7c7c"/><rect x="51" y="137" width="1" height="1" fill="#7c7c7c"/><rect x="51" y="139" width="1" height="1" fill="#7c7c7c"/><rect x="51" y="141" width="1" height="1" fill="#7c7c7c"/><rect x="51" y="143" width="1" height="1" fill="#7c7c7c"/><rect x="51" y="145" width="1" height="1" fill="#7c7c7c"/><rect x="51" y="147" width="1" height="1" fill="#7c7c7c"/><rect x="51" y="149" width="1" height="1" fill="#7c7c7c"/><rect x="51" y="151" width="1" height="1" fill="#7c7c7c"/><rect x="51" y="153" width="1" height="1" fill="#7c7c7c"/><rect x="51" y="155" width="1" height="1" fill="#7c7c7c"/><rect x="51" y="157" width="1" height="1" fill="#7c7c7c"/><rect x="51" y="159" width="1" height="1" fill="#7c7c7c"/><rect x="51" y="161" width="1" height="1" fill="#7c7c7c"/><rect x="51" y="163" width="1" height="1" fill="#7c7c7c"/><rect x="51" y="165" width="1" height="1" fill="#7c7c7c"/><rect x="51" y="167" width="1" height="1" fill="#7c7c7c"/><rect x="51" y="169" width="1" height="1" fill="#7c7c7c"/><rect x="51" y="171" width="1" height="1" fill="#7c7c7c"/><rect x="51" y="173" width="1" height="1" fill="#7c7c7c"/><rect x="51" y="175" width="1" height="1" fill="#7c7c7c"/><rect x="51" y="177" width="1" height="1" fill="#7c7c7c"/><rect x="51" y="179" width="1" height="1" fill="#7c7c7c"/><rect x="51" y="181" width="1" height="1" fill="#7c7c7c"/><rect x="51" y="183" width="1" height="1" fill="#7c7c7c"/><rect x="51" y="185" width="1" height="1" fill="#7c7c7c"/><rect x="51" y="187" width="1" height="1" fill="#7c7c7c"/><rect x="51" y="189" width="1" height="1" fill="#7c7c7c"/><rect x="51" y="191" width="1" height="1" fill="#7c7c7c"/><rect x="51" y="193" width="1" height="1" fill="#7c7c7c"/><rect x="51" y="195" width="1" height="1" fill="#7c7c7c"/><rect x="51" y="197" width="1" height="1" fill="#7c7c7c"/><rect x="51" y="199" width="1" height="1" fill="#7c7c7c"/><rect x="51" y="201" width="1" height="1" fill="#7c7c7c"/><rect x="51" y="203" width="1" height="1" fill="#7c7c7c"/><rect x="51" y="205" width="1" height="1" fill="#7c7c7c"/><rect x="51" y="207" width="1" height="1" fill="#7c7c7c"/><rect x="51" y="209" width="1" height="1" fill="#7c7c7c"/><rect x="51" y="211" width="1" height="1" fill="#7c7c7c"/><rect x="51" y="213" width="1" height="1" fill="#7c7c7c"/><rect x="51" y="215" width="1" height="1" fill="#7c7c7c"/><rect x="51" y="217" width="1" height="1" fill="#7c7c7c"/><rect x="51" y="219" width="1" height="1" fill="#7c7c7c"/><rect x="51" y="221" width="1" height="1" fill="#7c7c7c"/><rect x="51" y="223" width="1" height="1" fill="#7c7c7c"/><rect x="51" y="225" width="1" height="1" fill="#7c7c7c"/><rect x="51" y="227" width="1" height="1" fill="#7c7c7c"/><rect x="51" y="229" width="1" height="1" fill="#7c7c7c"/><rect x="51" y="231" width="1" height="1" fill="#7c7c7c"/><rect x="51" y="233" width="1" height="1" fill="#7c7c7c"/><rect x="51" y="235" width="1" height="1" fill="#7c7c7c"/><rect x="51" y="237" width="1" height="1" fill="#7c7c7c"/><rect x="51" y="239" width="1" height="1" fill="#7c7c7c"/><rect x="51" y="241" width="1" height="1" fill="#7c7c7c"/><rect x="51" y="243" width="1" height="1" fill="#7c7c7c"/><rect x="51" y="245" width="1" height="1" fill="#7c7c7c"/><rect x="51" y="247" width="1" height="1" fill="#7c7c7c"/><rect x="51" y="249" width="1" height="1" fill="#7c7c7c"/><rect x="51" y="251" width="1" height="1" fill="#7c7c7c"/><rect x="51" y="253" width="1" height="1" fill="#7c7c7c"/><rect x="51" y="255" width="1" height="1" fill="#7c7c7c"/><rect x="51" y="257" width="1" height="1" fill="#7c7c7c"/><rect x="51" y="259" width="1" height="1" fill="#7c7c7c"/><rect x="51" y="261" width="1" height="1" fill="#7c7c7c"/><rect x="51" y="263" width="1" height="1" fill="#7c7c7c"/><rect x="51" y="265" width="1" height="1" fill="#7c7c7c"/><rect x="51" y="267" width="1" height="1" fill="#7c7c7c"/><rect x="51" y="269" width="1" height="1" fill="#7c7c7c"/><rect x="51" y="271" width="1" height="1" fill="#7c7c7c"/><rect x="51" y="273" width="1" height="1" fill="#7c7c7c"/><rect x="51" y="275" width="1" height="1" fill="#7c7c7c"/><rect x="51" y="277" width="1" height="1" fill="#7c7c7c"/><rect x="51" y="279" width="1" height="1" fill="#7c7c7c"/><rect x="51" y="281" width="1" height="1" fill="#7c7c7c"/><rect x="51" y="283" width="1" height="1" fill="#7c7c7c"/><rect x="51" y="285" width="1" height="1" fill="#7c7c7c"/><rect x="51" y="287" width="1" height="1" fill="#7c7c7c"/><rect x="51" y="289" width="1" height="1" fill="#7c7c7c"/><rect x="51" y="291" width="1" height="1" fill="#7c7c7c"/><rect x="51" y="293" width="1" height="1" fill="#7c7c7c"/><rect x="51" y="295" width="1" height="1" fill="#7c7c7c"/><rect x="51" y="297" width="1" height="1" fill="#7c7c7c"/><rect x="51" y="299" width="1" height="1" fill="#7c7c7c"/><rect x="51" y="301" width="1" height="1" fill="#7c7c7c"/><rect x="51" y="303" width="1" height="1" fill="#7c7c7c"/><rect x="51" y="305" width="1" height="1" fill="#7c7c7c"/><rect x="51" y="307" width="1" height="1" fill="#7c7c7c"/><rect x="51" y="309" width="1" height="1" fill="#7c7c7c"/><rect x="51" y="311" width="1" height="1" fill="#7c7c7c"/><rect x="51" y="313" width="1" height="1" fill="#7c7c7c"/><rect x="51" y="315" width="1" height="1" fill="#7c7c7c"/><rect x="51" y="317" width="1" height="1" fill="#7c7c7c"/><rect x="51" y="319" width="1" height="1" fill="#7c7c7c"/><rect x="51" y="321" width="1" height="1" fill="#7c7c7c"/><rect x="51" y="323" width="1" height="1" fill="#7c7c7c"/><rect x="51" y="325" width="1" height="1" fill="#7c7c7c"/><rect x="51" y="327" width="1" height="1" fill="#7c7c7c"/><rect x="51" y="329" width="1" height="1" fill="#7c7c7c"/><rect x="51" y="331" width="1" height="1" fill="#7c7c7c"/><rect x="51" y="333" width="1" height="1" fill="#7c7c7c"/><rect x="51" y="335" width="1" height="1" fill="#7c7c7c"/><rect x="51" y="337" width="1" height="1" fill="#7c7c7c"/><rect x="51" y="339" width="1" height="1" fill="#7c7c7c"/><rect x="51" y="341" width="1" height="1" fill="#7c7c7c"/><rect x="51" y="343" width="1" height="1" fill="#7c7c7c"/><rect x="51" y="345" width="1" height="1" fill="#7c7c7c"/><rect x="51" y="347" width="1" height="1" fill="#7c7c7c"/><rect x="51" y="349" width="1" height="1" fill="#7c7c7c"/><rect x="51" y="351" width="1" height="1" fill="#7c7c7c"/><rect x="51" y="353" width="1" height="1" fill="#7c7c7c"/><rect x="51" y="355" width="1" height="1" fill="#7c7c7c"/><rect x="51" y="357" width="1" height="1" fill="#7c7c7c"/><rect x="51" y="359" width="1" height="1" fill="#7c7c7c"/><rect x="51" y="361" width="1" height="1" fill="#7c7c7c"/><rect x="51" y="363" width="1" height="1" fill="#7c7c7c"/><rect x="51" y="365" width="1" height="1" fill="#7c7c7c"/><rect x="51" y="367" width="1" height="1" fill="#7c7c7c"/><rect x="51" y="369" width="1" height="1" fill="#7c7c7c"/><rect x="51" y="371" width="1" height="1" fill="#7c7c7c"/><rect x="51" y="373" width="1" height="1" fill="#7c7c7c"/><rect x="51" y="375" width="1" height="1" fill="#7c7c7c"/><rect x="51" y="377" width="1" height="1" fill="#7c7c7c"/><rect x="51" y="379" width="1" height="1" fill="#7c7c7c"/><rect x="51" y="381" width="1" height="1" fill="#7c7c7c"/><rect x="51" y="383" width="1" height="1" fill="#7c7c7c"/><rect x="51" y="385" width="1" height="1" fill="#7c7c7c"/><rect x="51" y="387" width="1" height="1" fill="#7c7c7c"/><rect x="51" y="389" width="1" height="1" fill="#7c7c7c"/><rect x="51" y="391" width="1" height="1" fill="#7c7c7c"/><rect x="51" y="393" width="1" height="1" fill="#7c7c7c"/><rect x="51" y="395" width="1" height="1" fill="#7c7c7c"/><rect x="51" y="397" width="1" height="1" fill="#7c7c7c"/><rect x="51" y="399" width="1" height="1" fill="#7c7c7c"/><rect x="51" y="401" width="1" height="1" fill="#7c7c7c"/><rect x="51" y="403" width="1" height="1" fill="#7c7c7c"/><rect x="51" y="405" width="1" height="1" fill="#7c7c7c"/><rect x="51" y="407" width="1" height="1" fill="#7c7c7c"/><rect x="51" y="409" width="1" height="1" fill="#7c7c7c"/><rect x="51" y="411" width="1" height="1" fill="#7c7c7c"/><rect x="51" y="413" width="1" height="1" fill="#7c7c7c"/><rect x="51" y="415" width="1" height="1" fill="#7c7c7c"/><rect x="51" y="417" width="1" height="1" fill="#7c7c7c"/><rect x="51" y="419" width="1" height="1" fill="#7c7c7c"/><rect x="51" y="421" width="1" height="1" fill="#7c7c7c"/><rect x="51" y="423" width="1" height="1" fill="#7c7c7c"/><rect x="51" y="425" width="1" height="1" fill="#7c7c7c"/><rect x="51" y="427" width="1" height="1" fill="#7c7c7c"/><rect x="51" y="429" width="1" height="1" fill="#7c7c7c"/><rect x="51" y="431" width="1" height="1" fill="#7c7c7c"/><rect x="51" y="433" width="1" height="1" fill="#7c7c7c"/><rect x="51" y="435" width="1" height="1" fill="#7c7c7c"/><rect x="51" y="437" width="1" height="1" fill="#7c7c7c"/><rect x="51" y="439" width="1" height="1" fill="#7c7c7c"/><rect x="51" y="441" width="1" height="1" fill="#7c7c7c"/><rect x="51" y="443" width="1" height="1" fill="#7c7c7c"/><rect x="51" y="445" width="1" height="1" fill="#7c7c7c"/><rect x="51" y="447" width="1" height="1" fill="#7c7c7c"/><rect x="51" y="449" width="1" height="1" fill="#7c7c7c"/><rect x="51" y="451" width="1" height="1" fill="#7c7c7c"/><rect x="51" y="453" width="1" height="1" fill="#7c7c7c"/><rect x="51" y="455" width="1" height="1" fill="#7c7c7c"/><rect x="51" y="457" width="1" height="1" fill="#7c7c7c"/><rect x="51" y="459" width="1" height="1" fill="#7c7c7c"/><rect x="51" y="461" width="1" height="1" fill="#7c7c7c"/><rect x="51" y="463" width="1" height="1" fill="#7c7c7c"/><rect x="51" y="465" width="1" height="1" fill="#7c7c7c"/><rect x="51" y="467" width="1" height="1" fill="#7c7c7c"/><rect x="51" y="469" width="1" height="1" fill="#7c7c7c"/><rect x="70" y="103" width="1" height="1" fill="#7c7c7c"/><rect x="70" y="105" width="1" height="1" fill="#7c7c7c"/><rect x="70" y="107" width="1" height="1" fill="#7c7c7c"/><rect x="70" y="109" width="1" height="1" fill="#7c7c7c"/><rect x="70" y="111" width="1" height="1" fill="#7c7c7c"/><rect x="70" y="113" width="1" height="1" fill="#7c7c7c"/><rect x="70" y="115" width="1" height="1" fill="#7c7c7c"/><rect x="70" y="117" width="1" height="1" fill="#7c7c7c"/><rect x="70" y="119" width="1" height="1" fill="#7c7c7c"/><rect x="70" y="121" width="1" height="1" fill="#7c7c7c"/><rect x="70" y="123" width="1" height="1" fill="#7c7c7c"/><rect x="70" y="125" width="1" height="1" fill="#7c7c7c"/><rect x="70" y="127" width="1" height="1" fill="#7c7c7c"/><rect x="70" y="129" width="1" height="1" fill="#7c7c7c"/><rect x="70" y="131" width="1" height="1" fill="#7c7c7c"/><rect x="70" y="133" width="1" height="1" fill="#7c7c7c"/><rect x="70" y="135" width="1" height="1" fill="#7c7c7c"/><rect x="70" y="137" width="1" height="1" fill="#7c7c7c"/><rect x="70" y="139" width="1" height="1" fill="#7c7c7c"/><rect x="70" y="141" width="1" height="1" fill="#7c7c7c"/><rect x="70" y="143" width="1" height="1" fill="#7c7c7c"/><rect x="70" y="145" width="1" height="1" fill="#7c7c7c"/><rect x="70" y="147" width="1" height="1" fill="#7c7c7c"/><rect x="70" y="149" width="1" height="1" fill="#7c7c7c"/><rect x="70" y="151" width="1" height="1" fill="#7c7c7c"/><rect x="70" y="153" width="1" height="1" fill="#7c7c7c"/><rect x="70" y="155" width="1" height="1" fill="#7c7c7c"/><rect x="70" y="157" width="1" height="1" fill="#7c7c7c"/><rect x="70" y="159" width="1" height="1" fill="#7c7c7c"/><rect x="70" y="161" width="1" height="1" fill="#7c7c7c"/><rect x="70" y="163" width="1" height="1" fill="#7c7c7c"/><rect x="70" y="165" width="1" height="1" fill="#7c7c7c"/><rect x="70" y="167" width="1" height="1" fill="#7c7c7c"/><rect x="70" y="169" width="1" height="1" fill="#7c7c7c"/><rect x="70" y="171" width="1" height="1" fill="#7c7c7c"/><rect x="70" y="173" width="1" height="1" fill="#7c7c7c"/><rect x="70" y="175" width="1" height="1" fill="#7c7c7c"/><rect x="70" y="177" width="1" height="1" fill="#7c7c7c"/><rect x="70" y="179" width="1" height="1" fill="#7c7c7c"/><rect x="70" y="181" width="1" height="1" fill="#7c7c7c"/><rect x="70" y="183" width="1" height="1" fill="#7c7c7c"/><rect x="70" y="185" width="1" height="1" fill="#7c7c7c"/><rect x="70" y="187" width="1" height="1" fill="#7c7c7c"/><rect x="70" y="189" width="1" height="1" fill="#7c7c7c"/><rect x="70" y="191" width="1" height="1" fill="#7c7c7c"/><rect x="70" y="193" width="1" height="1" fill="#7c7c7c"/><rect x="70" y="195" width="1" height="1" fill="#7c7c7c"/><rect x="70" y="197" width="1" height="1" fill="#7c7c7c"/><rect x="70" y="199" width="1" height="1" fill="#7c7c7c"/><rect x="70" y="201" width="1" height="1" fill="#7c7c7c"/><rect x="70" y="203" width="1" height="1" fill="#7c7c7c"/><rect x="70" y="205" width="1" height="1" fill="#7c7c7c"/><rect x="70" y="207" width="1" height="1" fill="#7c7c7c"/><rect x="70" y="209" width="1" height="1" fill="#7c7c7c"/><rect x="70" y="211" width="1" height="1" fill="#7c7c7c"/><rect x="70" y="213" width="1" height="1" fill="#7c7c7c"/><rect x="70" y="215" width="1" height="1" fill="#7c7c7c"/><rect x="70" y="217" width="1" height="1" fill="#7c7c7c"/><rect x="70" y="219" width="1" height="1" fill="#7c7c7c"/><rect x="70" y="221" width="1" height="1" fill="#7c7c7c"/><rect x="70" y="223" width="1" height="1" fill="#7c7c7c"/><rect x="70" y="225" width="1" height="1" fill="#7c7c7c"/><rect x="70" y="227" width="1" height="1" fill="#7c7c7c"/><rect x="70" y="229" width="1" height="1" fill="#7c7c7c"/><rect x="70" y="231" width="1" height="1" fill="#7c7c7c"/><rect x="70" y="233" width="1" height="1" fill="#7c7c7c"/><rect x="70" y="235" width="1" height="1" fill="#7c7c7c"/><rect x="70" y="237" width="1" height="1" fill="#7c7c7c"/><rect x="70" y="239" width="1" height="1" fill="#7c7c7c"/><rect x="70" y="241" width="1" height="1" fill="#7c7c7c"/><rect x="70" y="243" width="1" height="1" fill="#7c7c7c"/><rect x="70" y="245" width="1" height="1" fill="#7c7c7c"/><rect x="70" y="247" width="1" height="1" fill="#7c7c7c"/><rect x="70" y="249" width="1" height="1" fill="#7c7c7c"/><rect x="70" y="251" width="1" height="1" fill="#7c7c7c"/><rect x="70" y="253" width="1" height="1" fill="#7c7c7c"/><rect x="70" y="255" width="1" height="1" fill="#7c7c7c"/><rect x="70" y="257" width="1" height="1" fill="#7c7c7c"/><rect x="70" y="259" width="1" height="1" fill="#7c7c7c"/><rect x="70" y="261" width="1" height="1" fill="#7c7c7c"/><rect x="70" y="263" width="1" height="1" fill="#7c7c7c"/><rect x="70" y="265" width="1" height="1" fill="#7c7c7c"/><rect x="70" y="267" width="1" height="1" fill="#7c7c7c"/><rect x="70" y="269" width="1" height="1" fill="#7c7c7c"/><rect x="70" y="271" width="1" height="1" fill="#7c7c7c"/><rect x="70" y="273" width="1" height="1" fill="#7c7c7c"/><rect x="70" y="275" width="1" height="1" fill="#7c7c7c"/><rect x="70" y="277" width="1" height="1" fill="#7c7c7c"/><rect x="70" y="279" width="1" height="1" fill="#7c7c7c"/><rect x="70" y="281" width="1" height="1" fill="#7c7c7c"/><rect x="70" y="283" width="1" height="1" fill="#7c7c7c"/><rect x="70" y="285" width="1" height="1" fill="#7c7c7c"/><rect x="70" y="287" width="1" height="1" fill="#7c7c7c"/><rect x="70" y="289" width="1" height="1" fill="#7c7c7c"/><rect x="70" y="291" width="1" height="1" fill="#7c7c7c"/><rect x="70" y="293" width="1" height="1" fill="#7c7c7c"/><rect x="70" y="295" width="1" height="1" fill="#7c7c7c"/><rect x="70" y="297" width="1" height="1" fill="#7c7c7c"/><rect x="70" y="299" width="1" height="1" fill="#7c7c7c"/><rect x="70" y="301" width="1" height="1" fill="#7c7c7c"/><rect x="70" y="303" width="1" height="1" fill="#7c7c7c"/><rect x="70" y="305" width="1" height="1" fill="#7c7c7c"/><rect x="70" y="307" width="1" height="1" fill="#7c7c7c"/><rect x="70" y="309" width="1" height="1" fill="#7c7c7c"/><rect x="70" y="311" width="1" height="1" fill="#7c7c7c"/><rect x="70" y="313" width="1" height="1" fill="#7c7c7c"/><rect x="70" y="315" width="1" height="1" fill="#7c7c7c"/><rect x="70" y="317" width="1" height="1" fill="#7c7c7c"/><rect x="70" y="319" width="1" height="1" fill="#7c7c7c"/><rect x="70" y="321" width="1" height="1" fill="#7c7c7c"/><rect x="70" y="323" width="1" height="1" fill="#7c7c7c"/><rect x="70" y="325" width="1" height="1" fill="#7c7c7c"/><rect x="70" y="327" width="1" height="1" fill="#7c7c7c"/><rect x="70" y="329" width="1" height="1" fill="#7c7c7c"/><rect x="70" y="331" width="1" height="1" fill="#7c7c7c"/><rect x="70" y="333" width="1" height="1" fill="#7c7c7c"/><rect x="70" y="335" width="1" height="1" fill="#7c7c7c"/><rect x="70" y="337" width="1" height="1" fill="#7c7c7c"/><rect x="70" y="339" width="1" height="1" fill="#7c7c7c"/><rect x="70" y="341" width="1" height="1" fill="#7c7c7c"/><rect x="70" y="343" width="1" height="1" fill="#7c7c7c"/><rect x="70" y="345" width="1" height="1" fill="#7c7c7c"/><rect x="70" y="347" width="1" height="1" fill="#7c7c7c"/><rect x="70" y="349" width="1" height="1" fill="#7c7c7c"/><rect x="70" y="351" width="1" height="1" fill="#7c7c7c"/><rect x="70" y="353" width="1" height="1" fill="#7c7c7c"/><rect x="70" y="355" width="1" height="1" fill="#7c7c7c"/><rect x="70" y="357" width="1" height="1" fill="#7c7c7c"/><rect x="70" y="359" width="1" height="1" fill="#7c7c7c"/><rect x="70" y="361" width="1" height="1" fill="#7c7c7c"/><rect x="70" y="363" width="1" height="1" fill="#7c7c7c"/><rect x="70" y="365" width="1" height="1" fill="#7c7c7c"/><rect x="70" y="367" width="1" height="1" fill="#7c7c7c"/><rect x="70" y="369" width="1" height="1" fill="#7c7c7c"/><rect x="70" y="371" width="1" height="1" fill="#7c7c7c"/><rect x="70" y="373" width="1" height="1" fill="#7c7c7c"/><rect x="70" y="375" width="1" height="1" fill="#7c7c7c"/><rect x="70" y="377" width="1" height="1" fill="#7c7c7c"/><rect x="70" y="379" width="1" height="1" fill="#7c7c7c"/><rect x="70" y="381" width="1" height="1" fill="#7c7c7c"/><rect x="70" y="383" width="1" height="1" fill="#7c7c7c"/><rect x="70" y="385" width="1" height="1" fill="#7c7c7c"/><rect x="70" y="387" width="1" height="1" fill="#7c7c7c"/><rect x="70" y="389" width="1" height="1" fill="#7c7c7c"/><rect x="70" y="391" width="1" height="1" fill="#7c7c7c"/><rect x="70" y="393" width="1" height="1" fill="#7c7c7c"/><rect x="70" y="395" width="1" height="1" fill="#7c7c7c"/><rect x="70" y="397" width="1" height="1" fill="#7c7c7c"/><rect x="70" y="399" width="1" height="1" fill="#7c7c7c"/><rect x="28.5" y="75.5" width="8" height="8" rx="1" fill="url(#bx)" stroke="#8e8f8f"/><rect x="30" y="79" width="5" height="1" fill="#2a4aa0"/><rect x="38" y="79" width="1" height="1" fill="#7c7c7c"/><rect x="40" y="79" width="1" height="1" fill="#7c7c7c"/><rect x="42" y="79" width="1" height="1" fill="#7c7c7c"/><path d="M43.5 73.5 h6 l1.5 2 h6 v9 h-13.5 z" fill="url(#fd)" stroke="#8a7b58"/><rect x="44" y="74" width="5" height="1" fill="#fff2a8"/><rect x="44" y="76" width="12" height="1" fill="#fff7c0"/><path d="M43.5 84.5 h13.5 v-9" fill="none" stroke="#2e2410"/><rect x="47.5" y="91.5" width="8" height="8" rx="1" fill="url(#bx)" stroke="#8e8f8f"/><rect x="49" y="95" width="5" height="1" fill="#2a4aa0"/><rect x="57" y="95" width="1" height="1" fill="#7c7c7c"/><rect x="59" y="95" width="1" height="1" fill="#7c7c7c"/><rect x="61" y="95" width="1" height="1" fill="#7c7c7c"/><path d="M62.5 89.5 h6 l1.5 2 h6 v9 h-13.5 z" fill="url(#fd)" stroke="#8a7b58"/><rect x="63" y="90" width="5" height="1" fill="#fff2a8"/><rect x="63" y="92" width="12" height="1" fill="#fff7c0"/><path d="M62.5 100.5 h13.5 v-9" fill="none" stroke="#2e2410"/><rect x="72" y="111" width="1" height="1" fill="#7c7c7c"/><rect x="74" y="111" width="1" height="1" fill="#7c7c7c"/><rect x="76" y="111" width="1" height="1" fill="#7c7c7c"/><rect x="78" y="111" width="1" height="1" fill="#7c7c7c"/><rect x="80" y="111" width="1" height="1" fill="#7c7c7c"/><rect x="82" y="105" width="9" height="13" fill="#000"/><rect x="83" y="106" width="7" height="11" fill="#fff"/><rect x="90" y="106" width="3" height="3" fill="#0000a0"/><path d="M91 111.5 h2.5 v1 h1 v2 h1 v2.5 h-4.5" fill="#fff" stroke="#000" stroke-width="1"/><rect x="72" y="127" width="1" height="1" fill="#7c7c7c"/><rect x="74" y="127" width="1" height="1" fill="#7c7c7c"/><rect x="76" y="127" width="1" height="1" fill="#7c7c7c"/><rect x="78" y="127" width="1" height="1" fill="#7c7c7c"/><rect x="80" y="127" width="1" height="1" fill="#7c7c7c"/><rect x="82" y="121" width="9" height="13" fill="#000"/><rect x="83" y="122" width="7" height="11" fill="url(#dith)"/><rect x="90" y="122" width="3" height="3" fill="#0000a0"/><path d="M91 127.5 h2.5 v1 h1 v2 h1 v2.5 h-4.5" fill="url(#dith)" stroke="#000" stroke-width="1"/><rect x="72" y="143" width="1" height="1" fill="#7c7c7c"/><rect x="74" y="143" width="1" height="1" fill="#7c7c7c"/><rect x="76" y="143" width="1" height="1" fill="#7c7c7c"/><rect x="78" y="143" width="1" height="1" fill="#7c7c7c"/><rect x="80" y="143" width="1" height="1" fill="#7c7c7c"/><rect x="82" y="137" width="9" height="13" fill="#000"/><rect x="83" y="138" width="7" height="11" fill="#fff"/><rect x="90" y="138" width="3" height="3" fill="#0000a0"/><path d="M91 143.5 h2.5 v1 h1 v2 h1 v2.5 h-4.5" fill="#fff" stroke="#000" stroke-width="1"/><rect x="72" y="159" width="1" height="1" fill="#7c7c7c"/><rect x="74" y="159" width="1" height="1" fill="#7c7c7c"/><rect x="76" y="159" width="1" height="1" fill="#7c7c7c"/><rect x="78" y="159" width="1" height="1" fill="#7c7c7c"/><rect x="80" y="159" width="1" height="1" fill="#7c7c7c"/><rect x="82" y="153" width="9" height="13" fill="#000"/><rect x="83" y="154" width="7" height="11" fill="#fff"/><rect x="90" y="154" width="3" height="3" fill="#0000a0"/><path d="M91 159.5 h2.5 v1 h1 v2 h1 v2.5 h-4.5" fill="#fff" stroke="#000" stroke-width="1"/><rect x="72" y="175" width="1" height="1" fill="#7c7c7c"/><rect x="74" y="175" width="1" height="1" fill="#7c7c7c"/><rect x="76" y="175" width="1" height="1" fill="#7c7c7c"/><rect x="78" y="175" width="1" height="1" fill="#7c7c7c"/><rect x="80" y="175" width="1" height="1" fill="#7c7c7c"/><rect x="82" y="169" width="9" height="13" fill="#000"/><rect x="83" y="170" width="7" height="11" fill="#fff"/><rect x="90" y="170" width="3" height="3" fill="#0000a0"/><path d="M91 175.5 h2.5 v1 h1 v2 h1 v2.5 h-4.5" fill="#fff" stroke="#000" stroke-width="1"/><rect x="72" y="191" width="1" height="1" fill="#7c7c7c"/><rect x="74" y="191" width="1" height="1" fill="#7c7c7c"/><rect x="76" y="191" width="1" height="1" fill="#7c7c7c"/><rect x="78" y="191" width="1" height="1" fill="#7c7c7c"/><rect x="80" y="191" width="1" height="1" fill="#7c7c7c"/><rect x="82" y="185" width="9" height="13" fill="#000"/><rect x="83" y="186" width="7" height="11" fill="#fff"/><rect x="90" y="186" width="3" height="3" fill="#0000a0"/><path d="M91 191.5 h2.5 v1 h1 v2 h1 v2.5 h-4.5" fill="#fff" stroke="#000" stroke-width="1"/><rect x="72" y="207" width="1" height="1" fill="#7c7c7c"/><rect x="74" y="207" width="1" height="1" fill="#7c7c7c"/><rect x="76" y="207" width="1" height="1" fill="#7c7c7c"/><rect x="78" y="207" width="1" height="1" fill="#7c7c7c"/><rect x="80" y="207" width="1" height="1" fill="#7c7c7c"/><rect x="82" y="201" width="9" height="13" fill="#000"/><rect x="83" y="202" width="7" height="11" fill="#fff"/><rect x="90" y="202" width="3" height="3" fill="#0000a0"/><path d="M91 207.5 h2.5 v1 h1 v2 h1 v2.5 h-4.5" fill="#fff" stroke="#000" stroke-width="1"/><rect x="72" y="223" width="1" height="1" fill="#7c7c7c"/><rect x="74" y="223" width="1" height="1" fill="#7c7c7c"/><rect x="76" y="223" width="1" height="1" fill="#7c7c7c"/><rect x="78" y="223" width="1" height="1" fill="#7c7c7c"/><rect x="80" y="223" width="1" height="1" fill="#7c7c7c"/><rect x="82" y="217" width="9" height="13" fill="#000"/><rect x="83" y="218" width="7" height="11" fill="#fff"/><rect x="90" y="218" width="3" height="3" fill="#0000a0"/><path d="M91 223.5 h2.5 v1 h1 v2 h1 v2.5 h-4.5" fill="#fff" stroke="#000" stroke-width="1"/><rect x="72" y="239" width="1" height="1" fill="#7c7c7c"/><rect x="74" y="239" width="1" height="1" fill="#7c7c7c"/><rect x="76" y="239" width="1" height="1" fill="#7c7c7c"/><rect x="78" y="239" width="1" height="1" fill="#7c7c7c"/><rect x="80" y="239" width="1" height="1" fill="#7c7c7c"/><rect x="82" y="233" width="9" height="13" fill="#000"/><rect x="83" y="234" width="7" height="11" fill="#fff"/><rect x="90" y="234" width="3" height="3" fill="#0000a0"/><path d="M91 239.5 h2.5 v1 h1 v2 h1 v2.5 h-4.5" fill="#fff" stroke="#000" stroke-width="1"/><rect x="72" y="255" width="1" height="1" fill="#7c7c7c"/><rect x="74" y="255" width="1" height="1" fill="#7c7c7c"/><rect x="76" y="255" width="1" height="1" fill="#7c7c7c"/><rect x="78" y="255" width="1" height="1" fill="#7c7c7c"/><rect x="80" y="255" width="1" height="1" fill="#7c7c7c"/><rect x="82" y="249" width="9" height="13" fill="#000"/><rect x="83" y="250" width="7" height="11" fill="#fff"/><rect x="90" y="250" width="3" height="3" fill="#0000a0"/><path d="M91 255.5 h2.5 v1 h1 v2 h1 v2.5 h-4.5" fill="#fff" stroke="#000" stroke-width="1"/><rect x="72" y="271" width="1" height="1" fill="#7c7c7c"/><rect x="74" y="271" width="1" height="1" fill="#7c7c7c"/><rect x="76" y="271" width="1" height="1" fill="#7c7c7c"/><rect x="78" y="271" width="1" height="1" fill="#7c7c7c"/><rect x="80" y="271" width="1" height="1" fill="#7c7c7c"/><rect x="82" y="265" width="9" height="13" fill="#000"/><rect x="83" y="266" width="7" height="11" fill="#fff"/><rect x="90" y="266" width="3" height="3" fill="#0000a0"/><path d="M91 271.5 h2.5 v1 h1 v2 h1 v2.5 h-4.5" fill="#fff" stroke="#000" stroke-width="1"/><rect x="72" y="287" width="1" height="1" fill="#7c7c7c"/><rect x="74" y="287" width="1" height="1" fill="#7c7c7c"/><rect x="76" y="287" width="1" height="1" fill="#7c7c7c"/><rect x="78" y="287" width="1" height="1" fill="#7c7c7c"/><rect x="80" y="287" width="1" height="1" fill="#7c7c7c"/><rect x="82" y="281" width="9" height="13" fill="#000"/><rect x="83" y="282" width="7" height="11" fill="#fff"/><rect x="90" y="282" width="3" height="3" fill="#0000a0"/><path d="M91 287.5 h2.5 v1 h1 v2 h1 v2.5 h-4.5" fill="#fff" stroke="#000" stroke-width="1"/><rect x="72" y="303" width="1" height="1" fill="#7c7c7c"/><rect x="74" y="303" width="1" height="1" fill="#7c7c7c"/><rect x="76" y="303" width="1" height="1" fill="#7c7c7c"/><rect x="78" y="303" width="1" height="1" fill="#7c7c7c"/><rect x="80" y="303" width="1" height="1" fill="#7c7c7c"/><rect x="82" y="297" width="9" height="13" fill="#000"/><rect x="83" y="298" width="7" height="11" fill="#fff"/><rect x="90" y="298" width="3" height="3" fill="#0000a0"/><path d="M91 303.5 h2.5 v1 h1 v2 h1 v2.5 h-4.5" fill="#fff" stroke="#000" stroke-width="1"/><rect x="72" y="319" width="1" height="1" fill="#7c7c7c"/><rect x="74" y="319" width="1" height="1" fill="#7c7c7c"/><rect x="76" y="319" width="1" height="1" fill="#7c7c7c"/><rect x="78" y="319" width="1" height="1" fill="#7c7c7c"/><rect x="80" y="319" width="1" height="1" fill="#7c7c7c"/><rect x="82" y="313" width="9" height="13" fill="#000"/><rect x="83" y="314" width="7" height="11" fill="#fff"/><rect x="90" y="314" width="3" height="3" fill="#0000a0"/><path d="M91 319.5 h2.5 v1 h1 v2 h1 v2.5 h-4.5" fill="#fff" stroke="#000" stroke-width="1"/><rect x="72" y="335" width="1" height="1" fill="#7c7c7c"/><rect x="74" y="335" width="1" height="1" fill="#7c7c7c"/><rect x="76" y="335" width="1" height="1" fill="#7c7c7c"/><rect x="78" y="335" width="1" height="1" fill="#7c7c7c"/><rect x="80" y="335" width="1" height="1" fill="#7c7c7c"/><rect x="82" y="329" width="9" height="13" fill="#000"/><rect x="83" y="330" width="7" height="11" fill="#fff"/><rect x="90" y="330" width="3" height="3" fill="#0000a0"/><path d="M91 335.5 h2.5 v1 h1 v2 h1 v2.5 h-4.5" fill="#fff" stroke="#000" stroke-width="1"/><rect x="72" y="351" width="1" height="1" fill="#7c7c7c"/><rect x="74" y="351" width="1" height="1" fill="#7c7c7c"/><rect x="76" y="351" width="1" height="1" fill="#7c7c7c"/><rect x="78" y="351" width="1" height="1" fill="#7c7c7c"/><rect x="80" y="351" width="1" height="1" fill="#7c7c7c"/><rect x="82" y="345" width="9" height="13" fill="#000"/><rect x="83" y="346" width="7" height="11" fill="#fff"/><rect x="90" y="346" width="3" height="3" fill="#0000a0"/><path d="M91 351.5 h2.5 v1 h1 v2 h1 v2.5 h-4.5" fill="#fff" stroke="#000" stroke-width="1"/><rect x="72" y="367" width="1" height="1" fill="#7c7c7c"/><rect x="74" y="367" width="1" height="1" fill="#7c7c7c"/><rect x="76" y="367" width="1" height="1" fill="#7c7c7c"/><rect x="78" y="367" width="1" height="1" fill="#7c7c7c"/><rect x="80" y="367" width="1" height="1" fill="#7c7c7c"/><rect x="82" y="361" width="9" height="13" fill="#000"/><rect x="83" y="362" width="7" height="11" fill="#fff"/><rect x="90" y="362" width="3" height="3" fill="#0000a0"/><path d="M91 367.5 h2.5 v1 h1 v2 h1 v2.5 h-4.5" fill="#fff" stroke="#000" stroke-width="1"/><rect x="72" y="383" width="1" height="1" fill="#7c7c7c"/><rect x="74" y="383" width="1" height="1" fill="#7c7c7c"/><rect x="76" y="383" width="1" height="1" fill="#7c7c7c"/><rect x="78" y="383" width="1" height="1" fill="#7c7c7c"/><rect x="80" y="383" width="1" height="1" fill="#7c7c7c"/><rect x="82" y="377" width="9" height="13" fill="#000"/><rect x="83" y="378" width="7" height="11" fill="#fff"/><rect x="90" y="378" width="3" height="3" fill="#0000a0"/><path d="M91 383.5 h2.5 v1 h1 v2 h1 v2.5 h-4.5" fill="#fff" stroke="#000" stroke-width="1"/><rect x="72" y="399" width="1" height="1" fill="#7c7c7c"/><rect x="74" y="399" width="1" height="1" fill="#7c7c7c"/><rect x="76" y="399" width="1" height="1" fill="#7c7c7c"/><rect x="78" y="399" width="1" height="1" fill="#7c7c7c"/><rect x="80" y="399" width="1" height="1" fill="#7c7c7c"/><rect x="82" y="393" width="9" height="13" fill="#000"/><rect x="83" y="394" width="7" height="11" fill="#fff"/><rect x="90" y="394" width="3" height="3" fill="#0000a0"/><path d="M91 399.5 h2.5 v1 h1 v2 h1 v2.5 h-4.5" fill="#fff" stroke="#000" stroke-width="1"/><rect x="47.5" y="411.5" width="8" height="8" rx="1" fill="url(#bx)" stroke="#8e8f8f"/><rect x="49" y="415" width="5" height="1" fill="#2a4aa0"/><rect x="51" y="413" width="1" height="5" fill="#2a4aa0"/><rect x="57" y="415" width="1" height="1" fill="#7c7c7c"/><rect x="59" y="415" width="1" height="1" fill="#7c7c7c"/><rect x="61" y="415" width="1" height="1" fill="#7c7c7c"/><path d="M62.5 409.5 h6 l1.5 2 h6 v9 h-13.5 z" fill="url(#fd)" stroke="#8a7b58"/><rect x="63" y="410" width="5" height="1" fill="#fff2a8"/><rect x="63" y="412" width="12" height="1" fill="#fff7c0"/><path d="M62.5 420.5 h13.5 v-9" fill="none" stroke="#2e2410"/><rect x="47.5" y="427.5" width="8" height="8" rx="1" fill="url(#bx)" stroke="#8e8f8f"/><rect x="49" y="431" width="5" height="1" fill="#2a4aa0"/><rect x="51" y="429" width="1" height="5" fill="#2a4aa0"/><rect x="57" y="431" width="1" height="1" fill="#7c7c7c"/><rect x="59" y="431" width="1" height="1" fill="#7c7c7c"/><rect x="61" y="431" width="1" height="1" fill="#7c7c7c"/><path d="M62.5 425.5 h6 l1.5 2 h6 v9 h-13.5 z" fill="url(#fd)" stroke="#8a7b58"/><rect x="63" y="426" width="5" height="1" fill="#fff2a8"/><rect x="63" y="428" width="12" height="1" fill="#fff7c0"/><path d="M62.5 436.5 h13.5 v-9" fill="none" stroke="#2e2410"/><rect x="47.5" y="443.5" width="8" height="8" rx="1" fill="url(#bx)" stroke="#8e8f8f"/><rect x="49" y="447" width="5" height="1" fill="#2a4aa0"/><rect x="51" y="445" width="1" height="5" fill="#2a4aa0"/><rect x="57" y="447" width="1" height="1" fill="#7c7c7c"/><rect x="59" y="447" width="1" height="1" fill="#7c7c7c"/><rect x="61" y="447" width="1" height="1" fill="#7c7c7c"/><path d="M62.5 441.5 h6 l1.5 2 h6 v9 h-13.5 z" fill="url(#fd)" stroke="#8a7b58"/><rect x="63" y="442" width="5" height="1" fill="#fff2a8"/><rect x="63" y="444" width="12" height="1" fill="#fff7c0"/><path d="M62.5 452.5 h13.5 v-9" fill="none" stroke="#2e2410"/><rect x="47.5" y="459.5" width="8" height="8" rx="1" fill="url(#bx)" stroke="#8e8f8f"/><rect x="49" y="463" width="5" height="1" fill="#2a4aa0"/><rect x="51" y="461" width="1" height="5" fill="#2a4aa0"/><rect x="57" y="463" width="1" height="1" fill="#7c7c7c"/><rect x="59" y="463" width="1" height="1" fill="#7c7c7c"/><rect x="61" y="463" width="1" height="1" fill="#7c7c7c"/><path d="M62.5 457.5 h6 l1.5 2 h6 v9 h-13.5 z" fill="url(#fd)" stroke="#8a7b58"/><rect x="63" y="458" width="5" height="1" fill="#fff2a8"/><rect x="63" y="460" width="12" height="1" fill="#fff7c0"/><path d="M62.5 468.5 h13.5 v-9" fill="none" stroke="#2e2410"/></svg>
<div class="a" style="left:276px;top:1px;width:16px;height:391px;background:linear-gradient(90deg,#e3e3e3 0,#f0f0f0 2px,#f0f0f0 14px,#f6f6f6 16px)"></div>
<svg style="left:281px;top:8px" width="7" height="4" viewBox="0 0 7 4"><defs><linearGradient id="ar" x1="0" y1="0" x2="1" y2="1"><stop offset="0" stop-color="#202020"/><stop offset="1" stop-color="#8a8a8a"/></linearGradient></defs><path d="M3.5 0 L7 4 L0 4Z" fill="url(#ar)"/></svg>
<svg style="left:281px;top:380px" width="7" height="4" viewBox="0 0 7 4"><path d="M0 0 L7 0 L3.5 4Z" fill="url(#ar)"/></svg>
<div class="a" style="left:276px;top:19px;width:15px;height:250px;border:1px solid #979797;border-radius:2px;background:linear-gradient(90deg,#f3f3f3 0,#ececec 45%,#dadadd 50%,#cfd0d4 100%);box-shadow:inset 0 0 0 1px rgba(255,255,255,.7)"></div>
<svg style="left:280px;top:140px" width="8" height="8" viewBox="0 0 8 8" shape-rendering="crispEdges"><rect x="0" y="1" width="7" height="1" fill="#fff"/><rect x="0" y="4" width="7" height="1" fill="#fff"/><rect x="0" y="7" width="7" height="1" fill="#fff"/><rect x="0" y="0" width="7" height="1" fill="#666"/><rect x="0" y="3" width="7" height="1" fill="#666"/><rect x="0" y="6" width="7" height="1" fill="#666"/></svg>

<div class="a" style="left:0;top:392px;width:620px;height:1px;background:#fff"></div>
</div><div class="a" style="left:316px;top:69px;width:621px;height:395px;border:1px solid #828790;background:#fff;overflow:hidden">
<div class="a" style="left:1px;top:0;width:601px;height:24px;background:linear-gradient(#fff 0,#fff 10px,#f3f4f6 10px,#f3f4f6 23px);border-bottom:1px solid #d5d5d5"></div>
<div class="a" style="left:120px;top:1px;width:1px;height:22px;background:#e3e4e6"></div>
<div class="a" style="left:165px;top:1px;width:1px;height:22px;background:#e3e4e6"></div>
<div class="a" style="left:210px;top:1px;width:1px;height:22px;background:#e3e4e6"></div>
<div class="a" style="left:255px;top:1px;width:1px;height:22px;background:#e3e4e6"></div>
<div class="a" style="left:300px;top:1px;width:1px;height:22px;background:#e3e4e6"></div>
<div class="a" style="left:21px;top:161px;width:280px;height:17px;background:#3399ff;border:1px dotted #d27a1e"></div>
<div class="t" style="left:6px;top:7px;">Name</div><div class="t" style="left:100px;top:7px;width:60px;text-align:right;">L</div><div class="t" style="left:145px;top:7px;width:60px;text-align:right;">H</div><div class="t" style="left:190px;top:7px;width:60px;text-align:right;">C</div><div class="t" style="left:235px;top:7px;width:60px;text-align:right;">B</div><div class="t" style="left:22px;top:28px;">PN16</div><div class="t" style="left:22px;top:45px;">DN15</div><div class="t" style="left:100px;top:45px;width:60px;text-align:right;">13.0</div><div class="t" style="left:145px;top:45px;width:60px;text-align:right;">19.00</div><div class="t" style="left:190px;top:45px;width:60px;text-align:right;">9.5</div><div class="t" style="left:235px;top:45px;width:60px;text-align:right;">1.6</div><div class="t" style="left:22px;top:62px;">DN20</div><div class="t" style="left:100px;top:62px;width:60px;text-align:right;">15.0</div><div class="t" style="left:145px;top:62px;width:60px;text-align:right;">19.00</div><div class="t" style="left:190px;top:62px;width:60px;text-align:right;">10.5</div><div class="t" style="left:235px;top:62px;width:60px;text-align:right;">1.8</div><div class="t" style="left:22px;top:79px;">DN25</div><div class="t" style="left:100px;top:79px;width:60px;text-align:right;">16.0</div><div class="t" style="left:145px;top:79px;width:60px;text-align:right;">21.00</div><div class="t" style="left:190px;top:79px;width:60px;text-align:right;">11.5</div><div class="t" style="left:235px;top:79px;width:60px;text-align:right;">1.8</div><div class="t" style="left:22px;top:96px;">DN32</div><div class="t" style="left:100px;top:96px;width:60px;text-align:right;">18.0</div><div class="t" style="left:145px;top:96px;width:60px;text-align:right;">21.50</div><div class="t" style="left:190px;top:96px;width:60px;text-align:right;">14.0</div><div class="t" style="left:235px;top:96px;width:60px;text-align:right;">1.8</div><div class="t" style="left:22px;top:113px;">DN40</div><div class="t" style="left:100px;top:113px;width:60px;text-align:right;">20.0</div><div class="t" style="left:145px;top:113px;width:60px;text-align:right;">25.00</div><div class="t" style="left:190px;top:113px;width:60px;text-align:right;">15.0</div><div class="t" style="left:235px;top:113px;width:60px;text-align:right;">1.8</div><div class="t" style="left:22px;top:130px;">DN50</div><div class="t" style="left:100px;top:130px;width:60px;text-align:right;">23.0</div><div class="t" style="left:145px;top:130px;width:60px;text-align:right;">25.50</div><div class="t" style="left:190px;top:130px;width:60px;text-align:right;">16.5</div><div class="t" style="left:235px;top:130px;width:60px;text-align:right;">1.8</div><div class="t" style="left:22px;top:147px;">DN65</div><div class="t" style="left:100px;top:147px;width:60px;text-align:right;">29.0</div><div class="t" style="left:145px;top:147px;width:60px;text-align:right;">28.50</div><div class="t" style="left:190px;top:147px;width:60px;text-align:right;">18.5</div><div class="t" style="left:235px;top:147px;width:60px;text-align:right;">1.8</div><div class="t" style="left:22px;top:164px;color:#fff;">DN80</div><div class="t" style="left:100px;top:164px;width:60px;text-align:right;color:#fff;">31.0</div><div class="t" style="left:145px;top:164px;width:60px;text-align:right;color:#fff;">35.00</div><div class="t" style="left:190px;top:164px;width:60px;text-align:right;color:#fff;">20.0</div><div class="t" style="left:235px;top:164px;width:60px;text-align:right;color:#fff;">2.0</div><div class="t" style="left:22px;top:181px;">DN100</div><div class="t" style="left:100px;top:181px;width:60px;text-align:right;">35.0</div><div class="t" style="left:145px;top:181px;width:60px;text-align:right;">41.00</div><div class="t" style="left:190px;top:181px;width:60px;text-align:right;">22.0</div><div class="t" style="left:235px;top:181px;width:60px;text-align:right;">2.0</div><div class="t" style="left:22px;top:198px;">DN125</div><div class="t" style="left:100px;top:198px;width:60px;text-align:right;">40.0</div><div class="t" style="left:145px;top:198px;width:60px;text-align:right;">46.00</div><div class="t" style="left:190px;top:198px;width:60px;text-align:right;">25.0</div><div class="t" style="left:235px;top:198px;width:60px;text-align:right;">2.2</div><div class="t" style="left:22px;top:215px;">DN150</div><div class="t" style="left:100px;top:215px;width:60px;text-align:right;">48.0</div><div class="t" style="left:145px;top:215px;width:60px;text-align:right;">52.00</div><div class="t" style="left:190px;top:215px;width:60px;text-align:right;">28.5</div><div class="t" style="left:235px;top:215px;width:60px;text-align:right;">2.2</div><div class="t" style="left:22px;top:232px;">DN200</div><div class="t" style="left:100px;top:232px;width:60px;text-align:right;">60.0</div><div class="t" style="left:145px;top:232px;width:60px;text-align:right;">63.50</div><div class="t" style="left:190px;top:232px;width:60px;text-align:right;">34.0</div><div class="t" style="left:235px;top:232px;width:60px;text-align:right;">2.4</div><div class="t" style="left:22px;top:249px;">DN250</div><div class="t" style="left:100px;top:249px;width:60px;text-align:right;">73.0</div><div class="t" style="left:145px;top:249px;width:60px;text-align:right;">75.50</div><div class="t" style="left:190px;top:249px;width:60px;text-align:right;">40.5</div><div class="t" style="left:235px;top:249px;width:60px;text-align:right;">2.6</div><div class="t" style="left:22px;top:266px;">DN300</div><div class="t" style="left:100px;top:266px;width:60px;text-align:right;">85.0</div><div class="t" style="left:145px;top:266px;width:60px;text-align:right;">87.00</div><div class="t" style="left:190px;top:266px;width:60px;text-align:right;">46.0</div><div class="t" style="left:235px;top:266px;width:60px;text-align:right;">2.8</div><div class="t" style="left:22px;top:283px;letter-spacing:-0.2px">Gestra - PN6-AV801</div><div class="t" style="left:22px;top:300px;">Gestra - PN16-AV...</div><div class="t" style="left:22px;top:317px;">Gestra - PN25-AV...</div><div class="t" style="left:22px;top:334px;">Gestra - PN40-AV...</div><div class="t" style="left:22px;top:351px;">Gestra - PN16-AV...</div><div class="t" style="left:22px;top:368px;">Gestra - PN16-AV...</div><div class="t" style="left:22px;top:385px;">Gestra - PN25-AV...</div>
<svg style="left:-317px;top:-70px" width="952" height="777" viewBox="0 0 952 777" shape-rendering="crispEdges"><defs><linearGradient id="fd" x1="0" y1="0" x2="1" y2="1"><stop offset="0" stop-color="#fff6a8"/><stop offset=".5" stop-color="#f5d060"/><stop offset="1" stop-color="#de9c20"/></linearGradient></defs><path d="M322.5 97.5 h5 l1.5 2 h6 v2 h-7 l-3.5 7.5 h-2 z" fill="#fbe7a0" stroke="#8a7b58"/><path d="M326.5 101.5 h11 l-3.5 7 h-11 z" fill="url(#fd)" stroke="#8a7b58"/><path d="M323 108.5 h11.5 l3 -6.5" fill="none" stroke="#2e2410"/><rect x="330" y="112" width="1" height="1" fill="#7c7c7c"/><rect x="330" y="114" width="1" height="1" fill="#7c7c7c"/><rect x="330" y="116" width="1" height="1" fill="#7c7c7c"/><rect x="330" y="118" width="1" height="1" fill="#7c7c7c"/><rect x="330" y="120" width="1" height="1" fill="#7c7c7c"/><rect x="330" y="122" width="1" height="1" fill="#7c7c7c"/><rect x="330" y="124" width="1" height="1" fill="#7c7c7c"/><rect x="330" y="126" width="1" height="1" fill="#7c7c7c"/><rect x="330" y="128" width="1" height="1" fill="#7c7c7c"/><rect x="330" y="130" width="1" height="1" fill="#7c7c7c"/><rect x="330" y="132" width="1" height="1" fill="#7c7c7c"/><rect x="330" y="134" width="1" height="1" fill="#7c7c7c"/><rect x="330" y="136" width="1" height="1" fill="#7c7c7c"/><rect x="330" y="138" width="1" height="1" fill="#7c7c7c"/><rect x="330" y="140" width="1" height="1" fill="#7c7c7c"/><rect x="330" y="142" width="1" height="1" fill="#7c7c7c"/><rect x="330" y="144" width="1" height="1" fill="#7c7c7c"/><rect x="330" y="146" width="1" height="1" fill="#7c7c7c"/><rect x="330" y="148" width="1" height="1" fill="#7c7c7c"/><rect x="330" y="150" width="1" height="1" fill="#7c7c7c"/><rect x="330" y="152" width="1" height="1" fill="#7c7c7c"/><rect x="330" y="154" width="1" height="1" fill="#7c7c7c"/><rect x="330" y="156" width="1" height="1" fill="#7c7c7c"/><rect x="330" y="158" width="1" height="1" fill="#7c7c7c"/><rect x="330" y="160" width="1" height="1" fill="#7c7c7c"/><rect x="330" y="162" width="1" height="1" fill="#7c7c7c"/><rect x="330" y="164" width="1" height="1" fill="#7c7c7c"/><rect x="330" y="166" width="1" height="1" fill="#7c7c7c"/><rect x="330" y="168" width="1" height="1" fill="#7c7c7c"/><rect x="330" y="170" width="1" height="1" fill="#7c7c7c"/><rect x="330" y="172" width="1" height="1" fill="#7c7c7c"/><rect x="330" y="174" width="1" height="1" fill="#7c7c7c"/><rect x="330" y="176" width="1" height="1" fill="#7c7c7c"/><rect x="330" y="178" width="1" height="1" fill="#7c7c7c"/><rect x="330" y="180" width="1" height="1" fill="#7c7c7c"/><rect x="330" y="182" width="1" height="1" fill="#7c7c7c"/><rect x="330" y="184" width="1" height="1" fill="#7c7c7c"/><rect x="330" y="186" width="1" height="1" fill="#7c7c7c"/><rect x="330" y="188" width="1" height="1" fill="#7c7c7c"/><rect x="330" y="190" width="1" height="1" fill="#7c7c7c"/><rect x="330" y="192" width="1" height="1" fill="#7c7c7c"/><rect x="330" y="194" width="1" height="1" fill="#7c7c7c"/><rect x="330" y="196" width="1" height="1" fill="#7c7c7c"/><rect x="330" y="198" width="1" height="1" fill="#7c7c7c"/><rect x="330" y="200" width="1" height="1" fill="#7c7c7c"/><rect x="330" y="202" width="1" height="1" fill="#7c7c7c"/><rect x="330" y="204" width="1" height="1" fill="#7c7c7c"/><rect x="330" y="206" width="1" height="1" fill="#7c7c7c"/><rect x="330" y="208" width="1" height="1" fill="#7c7c7c"/><rect x="330" y="210" width="1" height="1" fill="#7c7c7c"/><rect x="330" y="212" width="1" height="1" fill="#7c7c7c"/><rect x="330" y="214" width="1" height="1" fill="#7c7c7c"/><rect x="330" y="216" width="1" height="1" fill="#7c7c7c"/><rect x="330" y="218" width="1" height="1" fill="#7c7c7c"/><rect x="330" y="220" width="1" height="1" fill="#7c7c7c"/><rect x="330" y="222" width="1" height="1" fill="#7c7c7c"/><rect x="330" y="224" width="1" height="1" fill="#7c7c7c"/><rect x="330" y="226" width="1" height="1" fill="#7c7c7c"/><rect x="330" y="228" width="1" height="1" fill="#7c7c7c"/><rect x="330" y="230" width="1" height="1" fill="#7c7c7c"/><rect x="330" y="232" width="1" height="1" fill="#7c7c7c"/><rect x="330" y="234" width="1" height="1" fill="#7c7c7c"/><rect x="330" y="236" width="1" height="1" fill="#7c7c7c"/><rect x="330" y="238" width="1" height="1" fill="#7c7c7c"/><rect x="330" y="240" width="1" height="1" fill="#7c7c7c"/><rect x="330" y="242" width="1" height="1" fill="#7c7c7c"/><rect x="330" y="244" width="1" height="1" fill="#7c7c7c"/><rect x="330" y="246" width="1" height="1" fill="#7c7c7c"/><rect x="330" y="248" width="1" height="1" fill="#7c7c7c"/><rect x="330" y="250" width="1" height="1" fill="#7c7c7c"/><rect x="330" y="252" width="1" height="1" fill="#7c7c7c"/><rect x="330" y="254" width="1" height="1" fill="#7c7c7c"/><rect x="330" y="256" width="1" height="1" fill="#7c7c7c"/><rect x="330" y="258" width="1" height="1" fill="#7c7c7c"/><rect x="330" y="260" width="1" height="1" fill="#7c7c7c"/><rect x="330" y="262" width="1" height="1" fill="#7c7c7c"/><rect x="330" y="264" width="1" height="1" fill="#7c7c7c"/><rect x="330" y="266" width="1" height="1" fill="#7c7c7c"/><rect x="330" y="268" width="1" height="1" fill="#7c7c7c"/><rect x="330" y="270" width="1" height="1" fill="#7c7c7c"/><rect x="330" y="272" width="1" height="1" fill="#7c7c7c"/><rect x="330" y="274" width="1" height="1" fill="#7c7c7c"/><rect x="330" y="276" width="1" height="1" fill="#7c7c7c"/><rect x="330" y="278" width="1" height="1" fill="#7c7c7c"/><rect x="330" y="280" width="1" height="1" fill="#7c7c7c"/><rect x="330" y="282" width="1" height="1" fill="#7c7c7c"/><rect x="330" y="284" width="1" height="1" fill="#7c7c7c"/><rect x="330" y="286" width="1" height="1" fill="#7c7c7c"/><rect x="330" y="288" width="1" height="1" fill="#7c7c7c"/><rect x="330" y="290" width="1" height="1" fill="#7c7c7c"/><rect x="330" y="292" width="1" height="1" fill="#7c7c7c"/><rect x="330" y="294" width="1" height="1" fill="#7c7c7c"/><rect x="330" y="296" width="1" height="1" fill="#7c7c7c"/><rect x="330" y="298" width="1" height="1" fill="#7c7c7c"/><rect x="330" y="300" width="1" height="1" fill="#7c7c7c"/><rect x="330" y="302" width="1" height="1" fill="#7c7c7c"/><rect x="330" y="304" width="1" height="1" fill="#7c7c7c"/><rect x="330" y="306" width="1" height="1" fill="#7c7c7c"/><rect x="330" y="308" width="1" height="1" fill="#7c7c7c"/><rect x="330" y="310" width="1" height="1" fill="#7c7c7c"/><rect x="330" y="312" width="1" height="1" fill="#7c7c7c"/><rect x="330" y="314" width="1" height="1" fill="#7c7c7c"/><rect x="330" y="316" width="1" height="1" fill="#7c7c7c"/><rect x="330" y="318" width="1" height="1" fill="#7c7c7c"/><rect x="330" y="320" width="1" height="1" fill="#7c7c7c"/><rect x="330" y="322" width="1" height="1" fill="#7c7c7c"/><rect x="330" y="324" width="1" height="1" fill="#7c7c7c"/><rect x="330" y="326" width="1" height="1" fill="#7c7c7c"/><rect x="330" y="328" width="1" height="1" fill="#7c7c7c"/><rect x="330" y="330" width="1" height="1" fill="#7c7c7c"/><rect x="330" y="332" width="1" height="1" fill="#7c7c7c"/><rect x="330" y="334" width="1" height="1" fill="#7c7c7c"/><rect x="330" y="336" width="1" height="1" fill="#7c7c7c"/><rect x="330" y="338" width="1" height="1" fill="#7c7c7c"/><rect x="330" y="340" width="1" height="1" fill="#7c7c7c"/><rect x="330" y="342" width="1" height="1" fill="#7c7c7c"/><rect x="330" y="344" width="1" height="1" fill="#7c7c7c"/><rect x="330" y="346" width="1" height="1" fill="#7c7c7c"/><rect x="330" y="348" width="1" height="1" fill="#7c7c7c"/><rect x="332" y="119" width="1" height="1" fill="#7c7c7c"/><rect x="334" y="119" width="1" height="1" fill="#7c7c7c"/><rect x="336" y="119" width="1" height="1" fill="#7c7c7c"/><rect x="332" y="136" width="1" height="1" fill="#7c7c7c"/><rect x="334" y="136" width="1" height="1" fill="#7c7c7c"/><rect x="336" y="136" width="1" height="1" fill="#7c7c7c"/><rect x="332" y="153" width="1" height="1" fill="#7c7c7c"/><rect x="334" y="153" width="1" height="1" fill="#7c7c7c"/><rect x="336" y="153" width="1" height="1" fill="#7c7c7c"/><rect x="332" y="170" width="1" height="1" fill="#7c7c7c"/><rect x="334" y="170" width="1" height="1" fill="#7c7c7c"/><rect x="336" y="170" width="1" height="1" fill="#7c7c7c"/><rect x="332" y="187" width="1" height="1" fill="#7c7c7c"/><rect x="334" y="187" width="1" height="1" fill="#7c7c7c"/><rect x="336" y="187" width="1" height="1" fill="#7c7c7c"/><rect x="332" y="204" width="1" height="1" fill="#7c7c7c"/><rect x="334" y="204" width="1" height="1" fill="#7c7c7c"/><rect x="336" y="204" width="1" height="1" fill="#7c7c7c"/><rect x="332" y="221" width="1" height="1" fill="#7c7c7c"/><rect x="334" y="221" width="1" height="1" fill="#7c7c7c"/><rect x="336" y="221" width="1" height="1" fill="#7c7c7c"/><rect x="332" y="238" width="1" height="1" fill="#7c7c7c"/><rect x="334" y="238" width="1" height="1" fill="#7c7c7c"/><rect x="336" y="238" width="1" height="1" fill="#7c7c7c"/><rect x="332" y="255" width="1" height="1" fill="#7c7c7c"/><rect x="334" y="255" width="1" height="1" fill="#7c7c7c"/><rect x="336" y="255" width="1" height="1" fill="#7c7c7c"/><rect x="332" y="272" width="1" height="1" fill="#7c7c7c"/><rect x="334" y="272" width="1" height="1" fill="#7c7c7c"/><rect x="336" y="272" width="1" height="1" fill="#7c7c7c"/><rect x="332" y="289" width="1" height="1" fill="#7c7c7c"/><rect x="334" y="289" width="1" height="1" fill="#7c7c7c"/><rect x="336" y="289" width="1" height="1" fill="#7c7c7c"/><rect x="332" y="306" width="1" height="1" fill="#7c7c7c"/><rect x="334" y="306" width="1" height="1" fill="#7c7c7c"/><rect x="336" y="306" width="1" height="1" fill="#7c7c7c"/><rect x="332" y="323" width="1" height="1" fill="#7c7c7c"/><rect x="334" y="323" width="1" height="1" fill="#7c7c7c"/><rect x="336" y="323" width="1" height="1" fill="#7c7c7c"/><rect x="332" y="340" width="1" height="1" fill="#7c7c7c"/><rect x="334" y="340" width="1" height="1" fill="#7c7c7c"/><rect x="336" y="340" width="1" height="1" fill="#7c7c7c"/><path d="M322.5 352.5 h6 l1.5 2 h6 v9 h-13.5 z" fill="url(#fd)" stroke="#8a7b58"/><rect x="323" y="353" width="5" height="1" fill="#fff2a8"/><rect x="323" y="355" width="12" height="1" fill="#fff7c0"/><path d="M322.5 363.5 h13.5 v-9" fill="none" stroke="#2e2410"/><path d="M322.5 369.5 h6 l1.5 2 h6 v9 h-13.5 z" fill="url(#fd)" stroke="#8a7b58"/><rect x="323" y="370" width="5" height="1" fill="#fff2a8"/><rect x="323" y="372" width="12" height="1" fill="#fff7c0"/><path d="M322.5 380.5 h13.5 v-9" fill="none" stroke="#2e2410"/><path d="M322.5 386.5 h6 l1.5 2 h6 v9 h-13.5 z" fill="url(#fd)" stroke="#8a7b58"/><rect x="323" y="387" width="5" height="1" fill="#fff2a8"/><rect x="323" y="389" width="12" height="1" fill="#fff7c0"/><path d="M322.5 397.5 h13.5 v-9" fill="none" stroke="#2e2410"/><path d="M322.5 403.5 h6 l1.5 2 h6 v9 h-13.5 z" fill="url(#fd)" stroke="#8a7b58"/><rect x="323" y="404" width="5" height="1" fill="#fff2a8"/><rect x="323" y="406" width="12" height="1" fill="#fff7c0"/><path d="M322.5 414.5 h13.5 v-9" fill="none" stroke="#2e2410"/><path d="M322.5 420.5 h6 l1.5 2 h6 v9 h-13.5 z" fill="url(#fd)" stroke="#8a7b58"/><rect x="323" y="421" width="5" height="1" fill="#fff2a8"/><rect x="323" y="423" width="12" height="1" fill="#fff7c0"/><path d="M322.5 431.5 h13.5 v-9" fill="none" stroke="#2e2410"/><path d="M322.5 437.5 h6 l1.5 2 h6 v9 h-13.5 z" fill="url(#fd)" stroke="#8a7b58"/><rect x="323" y="438" width="5" height="1" fill="#fff2a8"/><rect x="323" y="440" width="12" height="1" fill="#fff7c0"/><path d="M322.5 448.5 h13.5 v-9" fill="none" stroke="#2e2410"/><path d="M322.5 454.5 h6 l1.5 2 h6 v9 h-13.5 z" fill="url(#fd)" stroke="#8a7b58"/><rect x="323" y="455" width="5" height="1" fill="#fff2a8"/><rect x="323" y="457" width="12" height="1" fill="#fff7c0"/><path d="M322.5 465.5 h13.5 v-9" fill="none" stroke="#2e2410"/></svg>
<div class="a" style="left:602px;top:1px;width:16px;height:391px;background:linear-gradient(90deg,#e3e3e3 0,#f0f0f0 2px,#f0f0f0 14px,#f6f6f6 16px)"></div>
<svg style="left:607px;top:8px" width="7" height="4" viewBox="0 0 7 4"><defs><linearGradient id="ar2" x1="0" y1="0" x2="1" y2="1"><stop offset="0" stop-color="#202020"/><stop offset="1" stop-color="#8a8a8a"/></linearGradient></defs><path d="M3.5 0 L7 4 L0 4Z" fill="url(#ar2)"/></svg>
<svg style="left:607px;top:380px" width="7" height="4" viewBox="0 0 7 4"><path d="M0 0 L7 0 L3.5 4Z" fill="url(#ar2)"/></svg>
<div class="a" style="left:602px;top:19px;width:15px;height:298px;border:1px solid #979797;border-radius:2px;background:linear-gradient(90deg,#f3f3f3 0,#ececec 45%,#dadadd 50%,#cfd0d4 100%);box-shadow:inset 0 0 0 1px rgba(255,255,255,.7)"></div>
<svg style="left:606px;top:164px" width="8" height="8" viewBox="0 0 8 8" shape-rendering="crispEdges"><rect x="0" y="1" width="7" height="1" fill="#fff"/><rect x="0" y="4" width="7" height="1" fill="#fff"/><rect x="0" y="7" width="7" height="1" fill="#fff"/><rect x="0" y="0" width="7" height="1" fill="#666"/><rect x="0" y="3" width="7" height="1" fill="#666"/><rect x="0" y="6" width="7" height="1" fill="#666"/></svg>

<div class="a" style="left:0;top:392px;width:620px;height:1px;background:#fff"></div>
</div><div class="a" style="left:28px;top:474px;width:13px;height:13px;border:1px solid #8f8f8f;background:#fff"><div class="a" style="left:1px;top:1px;width:9px;height:9px;border:1px solid #c8cbd0;background:linear-gradient(135deg,#dcdde0,#fafafa)"></div></div>
<div class="t" style="left:44px;top:475px">Sort</div>
<div class="a" style="left:17px;top:493px;width:306px;height:259px;background:#fff"></div>
<div class="a" style="left:18px;top:494px;width:304px;height:257px;background:#000"></div>
<svg style="left:0;top:0" width="952" height="777" viewBox="0 0 952 777" shape-rendering="crispEdges"><defs><clipPath id="pc"><rect x="18" y="494" width="304" height="257"/></clipPath></defs><g clip-path="url(#pc)"><path d="M141.5 504.5 L219.5 504.5 L221.5 506.5 L221.5 514.5 L139.5 514.5 L139.5 506.5 L141.5 504.5" fill="none" stroke="#ff0000" stroke-width="1"/><path d="M148.5 515.5 L175.5 523.5" fill="none" stroke="#ff0000" stroke-width="1"/><path d="M212.5 515.5 L185.5 523.5" fill="none" stroke="#ff0000" stroke-width="1"/><path d="M175.5 523.5 L185.5 523.5" fill="none" stroke="#ff0000" stroke-width="1"/><path d="M176.5 523.5 L176.5 529.5" fill="none" stroke="#ff0000" stroke-width="1"/><path d="M184.5 523.5 L184.5 529.5" fill="none" stroke="#ff0000" stroke-width="1"/><path d="M170.5 529.5 L190.5 529.5 L190.5 551.5 L170.5 551.5 L170.5 529.5" fill="none" stroke="#ff0000" stroke-width="1"/><path d="M169.5 530.5 L162.5 539.5 L158.5 550.5 L156.5 560.5 L155.5 566.5 L155.5 579.5 L157.5 588.5 L159.5 596.5 L161.5 602.5 L161.5 608.5" fill="none" stroke="#ff0000" stroke-width="1"/><path d="M191.5 530.5 L198.5 539.5 L202.5 550.5 L204.5 560.5 L205.5 566.5 L205.5 579.5 L203.5 588.5 L201.5 596.5 L199.5 602.5 L199.5 608.5" fill="none" stroke="#ff0000" stroke-width="1"/><path d="M169.5 552.5 L166.5 557.5 L164.5 565.5 L164.5 580.5 L166.5 588.5 L169.5 596.5" fill="none" stroke="#ff0000" stroke-width="1"/><path d="M191.5 552.5 L194.5 557.5 L196.5 565.5 L196.5 580.5 L194.5 588.5 L191.5 596.5" fill="none" stroke="#ff0000" stroke-width="1"/><path d="M176.5 551.5 L176.5 575.5" fill="none" stroke="#ff0000" stroke-width="1"/><path d="M184.5 551.5 L184.5 575.5" fill="none" stroke="#ff0000" stroke-width="1"/><path d="M171.5 575.5 L190.5 575.5 L190.5 586.5 L171.5 586.5 L171.5 575.5" fill="none" stroke="#ff0000" stroke-width="1"/><path d="M174.5 586.5 L174.5 596.5" fill="none" stroke="#ff0000" stroke-width="1"/><path d="M187.5 586.5 L187.5 596.5" fill="none" stroke="#ff0000" stroke-width="1"/><path d="M169.5 596.5 L192.5 596.5 L192.5 608.5 L169.5 608.5 L169.5 596.5" fill="none" stroke="#ff0000" stroke-width="1"/><path d="M154.5 608.5 L206.5 608.5 L206.5 634.5 L154.5 634.5 L154.5 608.5" fill="none" stroke="#ff0000" stroke-width="1"/><path d="M154.5 623.5 L206.5 623.5" fill="none" stroke="#ff0000" stroke-width="1"/><path d="M108.5 614.5 L119.5 614.5 L119.5 716.5 L108.5 716.5 L108.5 614.5" fill="none" stroke="#ff0000" stroke-width="1"/><path d="M241.5 614.5 L252.5 614.5 L252.5 716.5 L241.5 716.5 L241.5 614.5" fill="none" stroke="#ff0000" stroke-width="1"/><path d="M156.5 634.5 L156.5 664.5 L159.5 669.5 L163.5 672.5 L166.5 673.5 L197.5 673.5" fill="none" stroke="#ff0000" stroke-width="1"/><path d="M120.5 642.5 L156.5 656.5" fill="none" stroke="#ff0000" stroke-width="1"/><path d="M120.5 641.5 L138.5 641.5 L138.5 640.5 L156.5 640.5" fill="none" stroke="#d8a878" stroke-width="1"/><path d="M206.5 634.5 L241.5 647.5" fill="none" stroke="#ff0000" stroke-width="1"/><path d="M197.5 673.5 L241.5 695.5" fill="none" stroke="#ff0000" stroke-width="1"/><path d="M191.5 673.5 L191.5 685.5 L189.5 692.5 L186.5 698.5 L181.5 703.5 L176.5 705.5 L170.5 706.5 L164.5 705.5 L158.5 701.5" fill="none" stroke="#ff0000" stroke-width="1"/><path d="M120.5 687.5 L123.5 686.5 L131.5 686.5 L134.5 687.5 L158.5 701.5" fill="none" stroke="#ff0000" stroke-width="1"/><path d="M181.5 703.5 L241.5 696.5" fill="none" stroke="#d8a878" stroke-width="1"/><path d="M180.5 505 V667" stroke="#6c9fd8" stroke-width="1" stroke-dasharray="9 3 1 2.6"/><path d="M108 665.5 H253" stroke="#6c9fd8" stroke-width="1" stroke-dasharray="9 3 1 2.6" stroke-dashoffset="3"/><path d="M105.5 600.5 L135.5 600.5" fill="none" stroke="#00ff00" stroke-width="1"/><path d="M108.5 593.5 L108.5 606.5" fill="none" stroke="#00ff00" stroke-width="1"/><path d="M119.5 593.5 L119.5 606.5" fill="none" stroke="#00ff00" stroke-width="1"/><path d="M105.5 604.5 L112.5 597.5" fill="none" stroke="#00ff00" stroke-width="1"/><path d="M116.5 604.5 L123.5 597.5" fill="none" stroke="#00ff00" stroke-width="1"/><rect x="127" y="589" width="2" height="11" fill="#00ff00"/><rect x="127" y="589" width="5" height="2" fill="#00ff00"/><rect x="132" y="590" width="2" height="4" fill="#00ff00"/><rect x="127" y="593" width="6" height="2" fill="#00ff00"/><rect x="133" y="595" width="2" height="4" fill="#00ff00"/><rect x="127" y="597" width="6" height="3" fill="#00ff00"/><path d="M70.5 610.5 L70.5 720.5" fill="none" stroke="#00ff00" stroke-width="1"/><path d="M63.5 614.5 L76.5 614.5" fill="none" stroke="#00ff00" stroke-width="1"/><path d="M63.5 716.5 L77.5 716.5" fill="none" stroke="#00ff00" stroke-width="1"/><path d="M66.5 610.5 L74.5 618.5" fill="none" stroke="#00ff00" stroke-width="1"/><path d="M66.5 712.5 L74.5 720.5" fill="none" stroke="#00ff00" stroke-width="1"/><rect x="59" y="663" width="2" height="5" fill="#00ff00"/><rect x="67" y="663" width="2" height="5" fill="#00ff00"/><rect x="61" y="668" width="6" height="2" fill="#00ff00"/><rect x="60" y="667" width="2" height="2" fill="#00ff00"/><rect x="66" y="667" width="2" height="2" fill="#00ff00"/><rect x="60" y="662" width="3" height="2" fill="#00ff00"/><rect x="65" y="662" width="3" height="1" fill="#00ff00"/><rect x="66" y="663" width="2" height="1" fill="#00ff00"/><rect x="61" y="661" width="2" height="1" fill="#00ff00"/><rect x="65" y="661" width="2" height="1" fill="#00ff00"/><path d="M276.5 501.5 L276.5 668.5" fill="none" stroke="#00ff00" stroke-width="1"/><path d="M270.5 504.5 L283.5 504.5" fill="none" stroke="#00ff00" stroke-width="1"/><path d="M270.5 665.5 L284.5 665.5" fill="none" stroke="#00ff00" stroke-width="1"/><path d="M273.5 501.5 L280.5 507.5" fill="none" stroke="#00ff00" stroke-width="1"/><path d="M273.5 662.5 L280.5 668.5" fill="none" stroke="#00ff00" stroke-width="1"/><rect x="266" y="588" width="10" height="2" fill="#00ff00"/><rect x="266" y="594" width="10" height="2" fill="#00ff00"/><rect x="269" y="590" width="2" height="4" fill="#00ff00"/><path d="M105.5 737.5 L252.5 737.5" fill="none" stroke="#00ff00" stroke-width="1"/><path d="M108.5 731.5 L108.5 744.5" fill="none" stroke="#00ff00" stroke-width="1"/><path d="M252.5 731.5 L252.5 744.5" fill="none" stroke="#00ff00" stroke-width="1"/><path d="M105.5 741.5 L111.5 734.5" fill="none" stroke="#00ff00" stroke-width="1"/><path d="M249.5 740.5 L256.5 734.5" fill="none" stroke="#00ff00" stroke-width="1"/><rect x="177" y="727" width="2" height="10" fill="#00ff00"/><rect x="177" y="735" width="7" height="2" fill="#00ff00"/><rect x="213" y="665" width="1" height="1" fill="#00ff00"/></g></svg>
<div class="t" style="left:157px;top:752px">DN80</div><div class="a" style="left:329px;top:479px;width:608px;height:228px;border:1px solid #d5dfe5;border-radius:3px;box-shadow:1px 1px 0 #fff, inset 1px 1px 0 #fff"></div>
<div class="a" style="left:334px;top:474px;width:118px;height:10px;background:#f0f0f0"></div>
<div class="t" style="left:337px;top:473px;letter-spacing:-0.1px">View and insertion point</div>
<div class="t" style="left:357px;top:502px;">Insertion point</div>
<div class="a" style="left:455px;top:498px;width:73px;height:21px;border:1px solid #afb3b6;border-radius:3px;background:#f4f4f4"></div>
<div class="t" style="left:458px;top:503px;color:#6d6d6d">Base point</div>
<svg style="left:516px;top:507px" width="8" height="5" viewBox="0 0 8 5"><path d="M0 0H7L3.5 4Z" fill="#8f8f8f"/></svg>
<div class="a" style="left:632px;top:494px;width:13px;height:13px;border:1px solid #8f8f8f;background:#fff"><div class="a" style="left:1px;top:1px;width:9px;height:9px;border:1px solid #c5c9cf;background:linear-gradient(135deg,#d3d6db,#f7f7f8)"></div></div><svg style="left:632px;top:494px" width="13" height="13" viewBox="0 0 13 13"><path d="M3.2 6.6 L5.3 9.6 L9.6 2.8" fill="none" stroke="#4b61a0" stroke-width="1.9" stroke-linejoin="miter"/></svg>
<div class="t" style="left:647px;top:495px;">System</div>
<div class="a" style="left:746px;top:495px;width:178px;height:20px;background:#fff;border-top:2px solid #7a7a7a;border-left:2px solid #7a7a7a;border-bottom:1px solid #e3e3e3;border-right:1px solid #e3e3e3"></div>
<div class="a" style="left:750px;top:499px;width:14px;height:14px;border:1px solid #000;background:#ff0040"></div>
<div class="t" style="left:765px;top:500px;">Supply</div>
<div class="a" style="left:909px;top:498px;width:13px;height:14px;border-radius:2px;background:linear-gradient(135deg,#dde7fb,#b2cdf5);box-shadow:inset 0 0 0 1px #c4d6f4"></div>
<svg style="left:910px;top:502px" width="11" height="7" viewBox="0 0 11 7"><path d="M1.5 1.5 L5.5 5 L9.5 1.5" fill="none" stroke="#3b4e72" stroke-width="2"/></svg>
<svg style="left:357px;top:542px" width="14" height="14" viewBox="0 0 14 14"><defs><radialGradient id="rg549" cx=".35" cy=".35" r=".8"><stop offset="0" stop-color="#fdfdfd"/><stop offset="1" stop-color="#d4d6da"/></radialGradient></defs><circle cx="7" cy="7" r="5.5" fill="url(#rg549)" stroke="#8a8a8a" stroke-width="1"/><defs><radialGradient id="rb" cx=".4" cy=".35" r=".7"><stop offset="0" stop-color="#b8f0ff"/><stop offset=".45" stop-color="#2aa0e8"/><stop offset="1" stop-color="#1070b8"/></radialGradient></defs><circle cx="7" cy="7" r="3.1" fill="url(#rb)" stroke="#0b2a4a" stroke-width="1.1"/></svg>
<div class="t" style="left:374px;top:543px;">View 1</div>
<svg style="left:357px;top:576px" width="14" height="14" viewBox="0 0 14 14"><defs><radialGradient id="rg583" cx=".35" cy=".35" r=".8"><stop offset="0" stop-color="#fdfdfd"/><stop offset="1" stop-color="#d4d6da"/></radialGradient></defs><circle cx="7" cy="7" r="5.5" fill="url(#rg583)" stroke="#8a8a8a" stroke-width="1"/></svg>
<div class="t" style="left:374px;top:577px;">View 2</div>
<svg style="left:357px;top:610px" width="14" height="14" viewBox="0 0 14 14"><defs><radialGradient id="rg617" cx=".35" cy=".35" r=".8"><stop offset="0" stop-color="#fdfdfd"/><stop offset="1" stop-color="#d4d6da"/></radialGradient></defs><circle cx="7" cy="7" r="5.5" fill="url(#rg617)" stroke="#8a8a8a" stroke-width="1"/></svg>
<div class="t" style="left:374px;top:611px;">Scheme</div>
<svg style="left:357px;top:645px" width="14" height="14" viewBox="0 0 14 14"><defs><radialGradient id="rg652" cx=".35" cy=".35" r=".8"><stop offset="0" stop-color="#fdfdfd"/><stop offset="1" stop-color="#d4d6da"/></radialGradient></defs><circle cx="7" cy="7" r="5.5" fill="url(#rg652)" stroke="#8a8a8a" stroke-width="1"/></svg>
<div class="t" style="left:374px;top:646px;">View 3</div>
<svg style="left:357px;top:679px" width="14" height="14" viewBox="0 0 14 14"><defs><radialGradient id="rg686" cx=".35" cy=".35" r=".8"><stop offset="0" stop-color="#fdfdfd"/><stop offset="1" stop-color="#d4d6da"/></radialGradient></defs><circle cx="7" cy="7" r="5.5" fill="url(#rg686)" stroke="#8a8a8a" stroke-width="1"/></svg>
<div class="t" style="left:374px;top:680px;">Symbol</div>
<div class="a" style="left:583px;top:553px;width:13px;height:13px;border:1px solid #8f8f8f;background:#fff"><div class="a" style="left:1px;top:1px;width:9px;height:9px;border:1px solid #c5c9cf;background:linear-gradient(135deg,#d3d6db,#f7f7f8)"></div></div><svg style="left:583px;top:553px" width="13" height="13" viewBox="0 0 13 13"><path d="M3.2 6.6 L5.3 9.6 L9.6 2.8" fill="none" stroke="#4b61a0" stroke-width="1.9" stroke-linejoin="miter"/></svg>
<div class="t" style="left:598px;top:554px;">Start element</div>
<div class="a" style="left:583px;top:588px;width:13px;height:13px;border:1px solid #8f8f8f;background:#fff"><div class="a" style="left:1px;top:1px;width:9px;height:9px;border:1px solid #c5c9cf;background:linear-gradient(135deg,#d3d6db,#f7f7f8)"></div></div><svg style="left:583px;top:588px" width="13" height="13" viewBox="0 0 13 13"><path d="M3.2 6.6 L5.3 9.6 L9.6 2.8" fill="none" stroke="#4b61a0" stroke-width="1.9" stroke-linejoin="miter"/></svg>
<div class="t" style="left:598px;top:589px;">End element</div>
<div class="a" style="left:583px;top:625px;width:13px;height:13px;border:1px solid #8f8f8f;background:#fff"><div class="a" style="left:1px;top:1px;width:9px;height:9px;border:1px solid #c5c9cf;background:linear-gradient(135deg,#d3d6db,#f7f7f8)"></div></div><svg style="left:583px;top:625px" width="13" height="13" viewBox="0 0 13 13"><path d="M3.2 6.6 L5.3 9.6 L9.6 2.8" fill="none" stroke="#4b61a0" stroke-width="1.9" stroke-linejoin="miter"/></svg>
<div class="t" style="left:598px;top:626px;">Insert reducer</div>
<div class="a" style="left:723px;top:549px;width:207px;height:21px;border:1px solid #707070;border-radius:3px;background:linear-gradient(#f2f2f2 0,#ebebeb 50%,#dddddd 50%,#cfcfcf 100%);box-shadow:inset 0 0 0 1px rgba(255,255,255,.8)"></div>
<div class="t" style="left:726px;top:554px;">Neck flanges</div>
<svg style="left:918px;top:558px" width="8" height="5" viewBox="0 0 8 5"><path d="M0 0H7L3.5 4Z" fill="#000"/></svg>
<div class="a" style="left:723px;top:584px;width:207px;height:21px;border:1px solid #707070;border-radius:3px;background:linear-gradient(#f2f2f2 0,#ebebeb 50%,#dddddd 50%,#cfcfcf 100%);box-shadow:inset 0 0 0 1px rgba(255,255,255,.8)"></div>
<div class="t" style="left:726px;top:589px;">Neck flanges</div>
<svg style="left:918px;top:593px" width="8" height="5" viewBox="0 0 8 5"><path d="M0 0H7L3.5 4Z" fill="#000"/></svg><div class="t" style="left:357px;top:727px;">Current unit: centimetres</div>
<div class="a" style="left:583px;top:723px;width:140px;height:31px;background:#f0f0f0;border-top:1px solid #fff;border-left:1px solid #fff;border-right:1px solid #a0a0a0;border-bottom:1px solid #a0a0a0"></div>
<svg style="left:588px;top:728px" width="22" height="20" viewBox="0 0 22 20" shape-rendering="crispEdges">
<rect x="2" y="6" width="12" height="12" fill="#444"/><rect x="3" y="7" width="10" height="10" fill="#fff"/>
<rect x="4" y="12" width="1" height="1" fill="#444"/><rect x="6" y="12" width="6" height="1" fill="#444"/>
<rect x="4" y="14" width="1" height="1" fill="#444"/><rect x="6" y="14" width="6" height="1" fill="#444"/>
<path d="M4 9 L9 4 L12 7 L8 10 Z" fill="#d8d8d8" stroke="#444" stroke-width=".8" shape-rendering="auto"/>
<rect x="9" y="3" width="5" height="2" fill="#555"/><rect x="9" y="5" width="5" height="3" fill="#d4d4d4"/>
<rect x="14" y="3" width="2" height="6" fill="#3a3aa8"/>
</svg>
<div class="t" style="left:637px;top:733px;">Object style</div>
<div class="a" style="left:758px;top:722px;width:179px;height:33px;border:1px solid #000;background:#f0f0f0;box-shadow:inset 0 -1px 0 #a0a0a0, inset 0 1px 0 #fff"></div>
<div class="a" style="left:917px;top:725px;width:1px;height:26px;background:#a0a0a0"></div><div class="a" style="left:918px;top:725px;width:1px;height:26px;background:#fff"></div>
<svg style="left:922px;top:735px" width="8" height="5" viewBox="0 0 8 5"><path d="M0 0H8L4 4.5Z" fill="#000"/></svg>
<div class="t" style="left:842px;top:732px;font-size:12px;line-height:14px">OK</div>
<svg style="left:766px;top:728px" width="22" height="24" viewBox="0 0 22 24">
<path d="M4.5 12.5 L9 20.5 L18 4.5" fill="none" stroke="#000" stroke-width="5.2" stroke-linecap="round" stroke-linejoin="round"/>
<path d="M4.5 12.5 L9 20.5 L18 4.5" fill="none" stroke="#008000" stroke-width="3" stroke-linecap="round" stroke-linejoin="round"/>
<path d="M4 12 L6 14.5 M17.2 4.5 L18.6 5.8" fill="none" stroke="#c0c0c0" stroke-width="1.6" stroke-linecap="round"/>
</svg>
<svg style="left:935px;top:759px" width="9" height="9" viewBox="0 0 9 9" shape-rendering="crispEdges">
<rect x="6" y="0" width="1" height="1" fill="#fff"/><rect x="7" y="1" width="1" height="1" fill="#999"/>
<rect x="3" y="3" width="1" height="1" fill="#fff"/><rect x="4" y="4" width="1" height="1" fill="#999"/><rect x="6" y="3" width="1" height="1" fill="#fff"/><rect x="7" y="4" width="1" height="1" fill="#999"/>
<rect x="0" y="6" width="1" height="1" fill="#fff"/><rect x="1" y="7" width="1" height="1" fill="#999"/><rect x="3" y="6" width="1" height="1" fill="#fff"/><rect x="4" y="7" width="1" height="1" fill="#999"/><rect x="6" y="6" width="1" height="1" fill="#fff"/><rect x="7" y="7" width="1" height="1" fill="#999"/>
</svg>
</body></html>
